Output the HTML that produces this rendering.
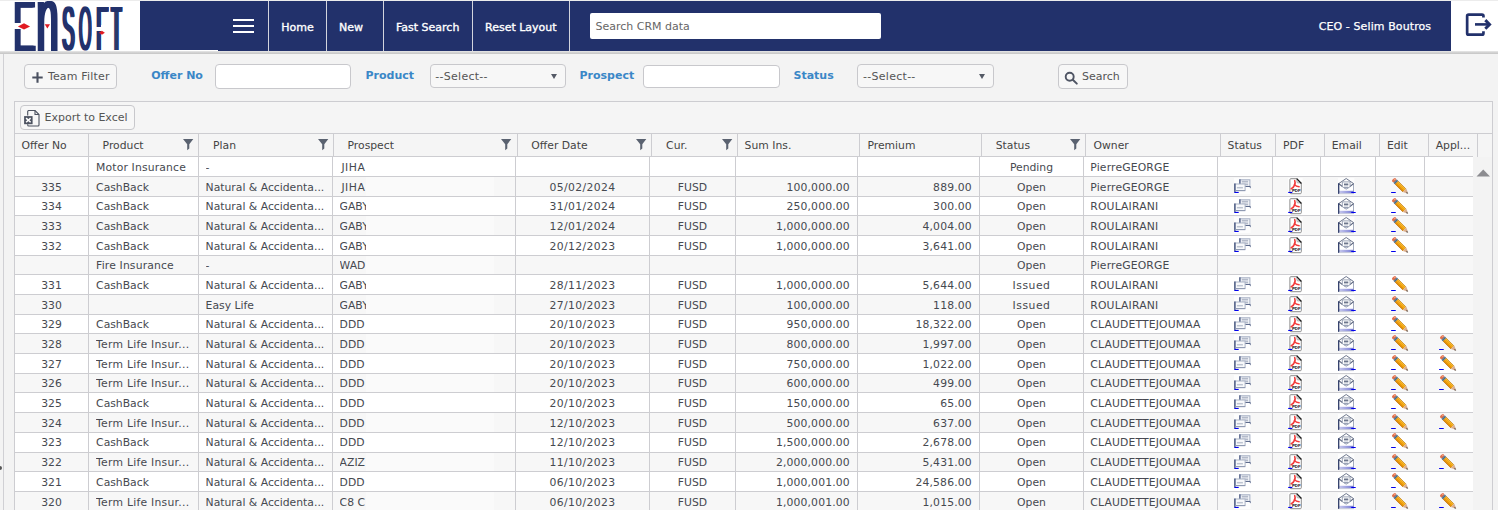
<!DOCTYPE html>
<html lang="en"><head><meta charset="utf-8"><title>CRM - Offers</title>
<style>
html,body{margin:0;padding:0}
body{width:1498px;height:510px;overflow:hidden;background:#f3f3f3;font-family:"DejaVu Sans","Liberation Sans",sans-serif;font-size:10.800px;color:#444;position:relative}
.abs{position:absolute}
.lg{position:absolute;white-space:nowrap;transform-origin:0 0;line-height:1;color:#22316b;font-family:"Liberation Sans",sans-serif}
#top{left:0;top:0;width:1498px;height:51.200px;background:#fff;border-top:1px solid #ececec;box-sizing:border-box}
#bar{left:140px;top:1px;width:1310.700px;height:48.800px;background:#22316b}
#barb{left:218px;top:1px;width:1232.700px;height:49.800px;background:#22316b}
#bar2{left:140px;top:49px;width:78px;height:2px;background:#fff;opacity:.0}
#topline{left:0;top:51.200px;width:1498px;height:2.700px;background:linear-gradient(#e4e4e4,#dcdcdc 45%,#c9c9c9 55%,#c9c9c9 85%,#e6e6e6)}
.sep{top:1px;width:1.100px;height:49.800px;background:#d3d4dd}
.nav{top:20.600px;color:#fff;font-size:11px;line-height:14px;white-space:nowrap;font-weight:normal;-webkit-text-stroke:.35px #fff}
.hb{left:233px;width:21px;height:2.300px;background:#fff}
#srch{left:589.900px;top:12.800px;width:291.300px;height:26.200px;background:#fff;border-radius:2px;box-sizing:border-box;color:#666;font-size:11px;line-height:27.600px;padding-left:5.600px}
#user{right:66.800px;top:20.400px;color:#fff;font-size:11px;line-height:14px;white-space:nowrap;letter-spacing:.1px;-webkit-text-stroke:.25px #fff}
#leftline{left:3px;top:54px;width:1px;height:458px;background:#d0d0d4}
.btn{box-sizing:border-box;border:1px solid #c8c8cc;border-radius:4px;background:#f7f7f7;color:#555;white-space:nowrap}
.lbl{top:69px;color:#3a87c7;font-weight:bold;font-size:11px;line-height:14px;white-space:nowrap}
.inp{top:64px;height:24.600px;box-sizing:border-box;border:1px solid #c8c8cc;border-radius:4px;background:#fff}
.sel{top:64px;height:23.700px;box-sizing:border-box;border:1px solid #c8c8cc;border-radius:4px;background:#f7f7f7;color:#555;font-size:11px;line-height:23.500px;padding-left:4.800px;letter-spacing:.27px}
.sel i{position:absolute;right:7.800px;top:9px;width:0;height:0;border-left:3.500px solid transparent;border-right:3.500px solid transparent;border-top:5.800px solid #555a66}
#grid{left:14px;top:101px;width:1479px;height:420px;box-sizing:border-box;border:1px solid #cdcdd1;background:#f5f5f5}
#hdr{left:15px;top:133px;width:1477px;height:23px;background:#f5f5f5;border-top:1px solid #cdcdd1;box-sizing:border-box}
.hc{top:135px;height:22px;line-height:22px;color:#444;font-size:10.800px;white-space:nowrap}
.hl{top:133px;width:1px;height:24px}
.fi{position:absolute;top:138.900px}
#body{left:15px;top:157px;width:1458px;height:354px;background:#fff}
.row{left:15px;width:1458px;box-sizing:border-box;border-top:1px solid #cdcdd1;background:#fff}
.row.alt{background:#f7f7f7}
.c{position:absolute;top:1px;white-space:nowrap;overflow:hidden;font-size:10.800px;color:#464950}
.vl{top:156px;width:1px;height:354px}
.red{left:365.500px;width:128.500px;background:#fff}
.ic{position:absolute;overflow:visible}
</style></head><body>

<svg class="abs" style="left:0;top:0" width="0" height="0"><defs><linearGradient id="eg" x1="0" y1="0" x2="1" y2="0"><stop offset="0" stop-color="#c9cbee"/><stop offset=".7" stop-color="#8f92dc"/><stop offset="1" stop-color="#6a6ed6"/></linearGradient><linearGradient id="pg" x1="0" y1="0" x2="0" y2="1"><stop offset="0" stop-color="#ffcf4a"/><stop offset=".45" stop-color="#fbb016"/><stop offset="1" stop-color="#e58a00"/></linearGradient></defs></svg>
<div id="top" class="abs"></div><div id="bar" class="abs"></div><div id="barb" class="abs"></div><div id="topline" class="abs"></div>
<div id="logo" class="abs" style="left:0;top:0;width:140px;height:51px;overflow:hidden"><span class="lg" style="left:12.27px;top:-9.50px;font-size:71.3px;transform:scale(0.472,1);text-shadow:2.83px 0 0 #22316b,5.66px 0 0 #22316b">E</span><span class="lg" style="left:34.70px;top:-27.20px;font-size:92px;transform:scale(0.432,1);text-shadow:3.40px 0 0 #22316b,6.81px 0 0 #22316b">n</span><span class="lg" style="left:61.20px;top:-2.80px;font-size:63px;transform:scale(0.292,1);text-shadow:4.28px 0 0 #22316b,8.56px 0 0 #22316b">S</span><span class="lg" style="left:78.35px;top:-2.80px;font-size:63px;transform:scale(0.255,1);text-shadow:3.92px 0 0 #22316b,7.84px 0 0 #22316b">O</span><span class="lg" style="left:94.90px;top:-2.80px;font-size:63px;transform:scale(0.315,1);text-shadow:3.97px 0 0 #22316b,7.94px 0 0 #22316b">F</span><span class="lg" style="left:109.70px;top:-2.80px;font-size:63px;transform:scale(0.257,1);text-shadow:3.89px 0 0 #22316b,7.78px 0 0 #22316b,11.67px 0 0 #22316b">T</span><div class="abs" style="left:14px;top:22.800px;width:23px;height:6px;background:#fff"></div><div class="abs" style="left:95px;top:26.500px;width:6px;height:4.500px;background:#fff"></div><div class="abs" style="left:100.600px;top:25px;width:9px;height:10px;background:#fff"></div><svg class="abs" style="left:0;top:0" width="140" height="51" viewBox="0 0 140 51"><path d="M17.900 26.400l6.100-3.100l6.100 3.100l-6.100 3z" fill="#e11b22"/><path d="M44.700 24.200h5.300l-2.650 4.300z" fill="#e11b22"/><path d="M98.900 32.700l3-2l3 2l-3 2z" fill="#e11b22"/></svg></div>
<div class="abs sep" style="left:267.7px"></div>
<div class="abs sep" style="left:325.7px"></div>
<div class="abs sep" style="left:382.7px"></div>
<div class="abs sep" style="left:471.7px"></div>
<div class="abs sep" style="left:568.7px"></div>
<div class="abs hb" style="top:19.0px"></div>
<div class="abs hb" style="top:24.8px"></div>
<div class="abs hb" style="top:30.6px"></div>
<div class="abs nav" style="left:281.3px">Home</div>
<div class="abs nav" style="left:339px">New</div>
<div class="abs nav" style="left:396px">Fast Search</div>
<div class="abs nav" style="left:485px">Reset Layout</div>
<div id="srch" class="abs">Search CRM data</div>
<div id="user" class="abs">CEO - Selim Boutros</div>
<svg class="abs" style="left:1464px;top:11px" width="30" height="28" viewBox="0 0 30 28"><path d="M19.450 6.600V5.050a1.500 1.500 0 0 0-1.500-1.500H4.650a1.500 1.500 0 0 0-1.500 1.500V22.150a1.500 1.500 0 0 0 1.500 1.500H17.950a1.500 1.500 0 0 0 1.500-1.500V20.300" fill="none" stroke="#22316b" stroke-width="2.700"/><path d="M11 13.400h13.500" fill="none" stroke="#22316b" stroke-width="2.600"/><path d="M21.300 9.100l4.300 4.300l-4.300 4.300" fill="none" stroke="#22316b" stroke-width="2.900"/></svg>
<div id="leftline" class="abs"></div>
<div class="abs btn" style="left:24.200px;top:64px;width:92.700px;height:24.700px;font-size:11px;line-height:24.500px"><svg style="position:absolute;left:6.600px;top:7px" width="11" height="11" viewBox="0 0 11 11"><path d="M5.500 0.300v10.400M0.300 5.500h10.400" stroke="#4a5060" stroke-width="2.100"/></svg><span style="position:absolute;left:22.700px;top:0;letter-spacing:.18px">Team Filter</span></div>
<div class="abs lbl" style="left:151.200px">Offer No</div><div class="abs inp" style="left:215.200px;width:135.800px"></div>
<div class="abs lbl" style="left:365.500px">Product</div><div class="abs sel" style="left:429.500px;width:136.200px">--Select--<i></i></div>
<div class="abs lbl" style="left:579.500px">Prospect</div><div class="abs inp" style="left:643.400px;width:136.200px;top:65px;height:22.700px"></div>
<div class="abs lbl" style="left:793.500px">Status</div><div class="abs sel" style="left:857.300px;width:136.300px">--Select--<i></i></div>
<div class="abs btn" style="left:1058.300px;top:64px;width:69.700px;height:24.700px;font-size:11px;line-height:24.500px"><svg style="position:absolute;left:4px;top:5px" width="16" height="16" viewBox="0 0 16 16"><circle cx="6.700" cy="6.700" r="4" fill="none" stroke="#4f5564" stroke-width="1.900"/><path d="M9.800 9.800l4 3.800" stroke="#4f5564" stroke-width="2" stroke-linecap="round"/></svg><span style="position:absolute;left:22.700px;top:0">Search</span></div>
<div id="grid" class="abs" style="border-color:#cdcdd1"></div>
<div class="abs btn" style="left:20.100px;top:105.400px;width:114.700px;height:24.300px;font-size:11px;line-height:23.600px;letter-spacing:-.02px"><svg style="position:absolute;left:2.900px;top:3.600px" width="17" height="17" viewBox="0 0 17 17"><path d="M3.700 5.500v-4a1 1 0 0 1 1-1h6.300l4 4v10.500a1 1 0 0 1-1 1h-9.300a1 1 0 0 1-1-1v-0.800" fill="none" stroke="#4d5361" stroke-width="1.100"/><path d="M11 0.500v4h4" fill="none" stroke="#4d5361" stroke-width="1.100"/><rect x="0.100" y="6.100" width="8.500" height="8.100" fill="#4d5361"/><path d="M2.100 8.100l4.500 4.200M6.600 8.100l-4.500 4.200" stroke="#fff" stroke-width="1.500"/></svg><span style="position:absolute;left:23.500px;top:0">Export to Excel</span></div>
<div id="hdr" class="abs" style="border-color:#cdcdd1"></div>
<div class="abs hc" style="left:21.6px">Offer No</div>
<div class="abs hc" style="left:102.6px">Product</div>
<svg class="fi" style="left:182.8px" viewBox="0 0 11 12" width="11" height="12"><path d="M0 0H10.300L6.300 5.200V9.600L4.200 11.300V5.200Z" fill="#5a6270"/></svg>
<div class="abs hc" style="left:213px">Plan</div>
<svg class="fi" style="left:317.8px" viewBox="0 0 11 12" width="11" height="12"><path d="M0 0H10.300L6.300 5.200V9.600L4.200 11.300V5.200Z" fill="#5a6270"/></svg>
<div class="abs hc" style="left:347.5px">Prospect</div>
<svg class="fi" style="left:500.9px" viewBox="0 0 11 12" width="11" height="12"><path d="M0 0H10.300L6.300 5.200V9.600L4.200 11.300V5.200Z" fill="#5a6270"/></svg>
<div class="abs hc" style="left:531.3px">Offer Date</div>
<svg class="fi" style="left:636.0px" viewBox="0 0 11 12" width="11" height="12"><path d="M0 0H10.300L6.300 5.200V9.600L4.200 11.300V5.200Z" fill="#5a6270"/></svg>
<div class="abs hc" style="left:666.1px">Cur.</div>
<svg class="fi" style="left:721.9px" viewBox="0 0 11 12" width="11" height="12"><path d="M0 0H10.300L6.300 5.200V9.600L4.200 11.300V5.200Z" fill="#5a6270"/></svg>
<div class="abs hc" style="left:744.6px">Sum Ins.</div>
<div class="abs hc" style="left:867.4px">Premium</div>
<div class="abs hc" style="left:995.7px">Status</div>
<svg class="fi" style="left:1069.8px" viewBox="0 0 11 12" width="11" height="12"><path d="M0 0H10.300L6.300 5.200V9.600L4.200 11.300V5.200Z" fill="#5a6270"/></svg>
<div class="abs hc" style="left:1093.5px">Owner</div>
<div class="abs hc" style="left:1227.6px">Status</div>
<div class="abs hc" style="left:1283.1px">PDF</div>
<div class="abs hc" style="left:1331.8px">Email</div>
<div class="abs hc" style="left:1386.9px">Edit</div>
<div class="abs hc" style="left:1435.7px">Appl...</div>
<div class="abs hl" style="left:88px;background:#cdcdd1"></div>
<div class="abs hl" style="left:198px;background:#cdcdd1"></div>
<div class="abs hl" style="left:333px;background:#cdcdd1"></div>
<div class="abs hl" style="left:517px;background:#cdcdd1"></div>
<div class="abs hl" style="left:651px;background:#cdcdd1"></div>
<div class="abs hl" style="left:737px;background:#cdcdd1"></div>
<div class="abs hl" style="left:859px;background:#cdcdd1"></div>
<div class="abs hl" style="left:981px;background:#cdcdd1"></div>
<div class="abs hl" style="left:1085px;background:#cdcdd1"></div>
<div class="abs hl" style="left:1220px;background:#cdcdd1"></div>
<div class="abs hl" style="left:1275px;background:#cdcdd1"></div>
<div class="abs hl" style="left:1324px;background:#cdcdd1"></div>
<div class="abs hl" style="left:1379px;background:#cdcdd1"></div>
<div class="abs hl" style="left:1428px;background:#cdcdd1"></div>
<div class="abs hl" style="left:1477px;background:#cdcdd1"></div>
<div id="body" class="abs"></div>
<div class="abs row" style="top:156px;height:20px;border-color:#cdcdd1"><div class="c" style="left:81.1px;width:100.9px;height:18px;line-height:19px;letter-spacing:0.15px">Motor Insurance</div><div class="c" style="left:190.6px;width:125.4px;height:18px;line-height:19px">-</div><div class="c" style="left:324.6px;width:174.4px;height:18px;line-height:19px"><span style="letter-spacing:.5px"><span style="margin-left:1.800px">J</span>IHA</span></div><div class="c" style="left:965px;width:103px;text-align:center;height:18px;line-height:19px">Pending</div><div class="c" style="left:1075.3px;width:125.7px;height:18px;line-height:19px;letter-spacing:0.15px">PierreGEORGE</div><div class="abs red" style="left:350.5px;top:0;height:19px;"></div></div>
<div class="abs row alt" style="top:176px;height:20px;border-color:#cdcdd1"><div class="c" style="left:0px;width:73px;text-align:center;height:18px;line-height:19px">335</div><div class="c" style="left:81.1px;width:100.9px;height:18px;line-height:19px">CashBack</div><div class="c" style="left:190.6px;width:125.4px;height:18px;line-height:19px">Natural &amp; Accidenta...</div><div class="c" style="left:324.6px;width:174.4px;height:18px;line-height:19px"><span style="letter-spacing:.5px"><span style="margin-left:1.800px">J</span>IHA</span></div><div class="c" style="left:501px;width:133px;text-align:center;height:18px;line-height:19px;letter-spacing:0.4px">05/02/2024</div><div class="c" style="left:635px;width:85px;text-align:center;height:18px;line-height:19px">FUSD</div><div class="c" style="left:721px;width:113.8px;text-align:right;height:18px;line-height:19px;letter-spacing:0.15px">100,000.00</div><div class="c" style="left:843px;width:113.8px;text-align:right;height:18px;line-height:19px;letter-spacing:0.15px">889.00</div><div class="c" style="left:965px;width:103px;text-align:center;height:18px;line-height:19px">Open</div><div class="c" style="left:1075.3px;width:125.7px;height:18px;line-height:19px;letter-spacing:0.15px">PierreGEORGE</div><div class="abs red" style="left:350.5px;top:0;height:19px;background:#fafafa"></div><svg class="ic" style="left:1218.7px;top:1px" width="18" height="17" viewBox="0 0 18 17"><rect x="0" y="0" width="16.500" height="16" fill="#fff" opacity=".75"/><rect x="5.900" y="1.800" width="10" height="6.600" fill="#f2f4f8" stroke="#a3adc2" stroke-width="1"/><path d="M5.900 1.300v7.500" stroke="#3b4b78" stroke-width="1.100"/><path d="M5.900 8.500h10.500" stroke="#5c6a8c" stroke-width="1"/><path d="M15.300 8.800h1.400v1.800z" fill="#4a5a80"/><path d="M7.800 3.400h6.300M7.800 5h6.300M7.800 6.600h6.300" stroke="#b3bac9" stroke-width="1.100"/><rect x="0.900" y="6" width="10.200" height="6.600" fill="#f8f9fb" stroke="#aab3c6" stroke-width="1"/><path d="M0.900 5.500v9" stroke="#3b4b78" stroke-width="1.300"/><path d="M0.900 12.600h10.200" stroke="#8d98b0" stroke-width="1"/><path d="M2.900 9.700h6" stroke="#bcc3d0" stroke-width="1.500"/><rect x="0.400" y="13.900" width="4.300" height="1.100" fill="#0000ee"/></svg><svg class="ic" style="left:1272.5px;top:1px" width="16" height="17" viewBox="0 0 16 17"><rect x="0" y="0" width="14.700" height="16.400" fill="#fff" opacity=".75"/><path d="M1.900 1.700a1 1 0 0 1 1-1h6l4.400 4.700v9.300a1 1 0 0 1-1 1h-9.400a1 1 0 0 1-1-1z" fill="#fff" stroke="#8c8c8c" stroke-width="1"/><path d="M8.900 0.700v3.200a1 1 0 0 0 1 1h3.400" fill="#e4e4e4" stroke="#999" stroke-width=".7"/><path d="M8.700 0.600l4.700 4.900" stroke="#1c1c1c" stroke-width="1.300"/><path d="M6.700 2.600c0.800 1.400 0.300 3.300-0.300 4.800c-0.700 1.700-1.900 2.900-3.200 3.400" fill="none" stroke="#f23a3a" stroke-width="1.600" stroke-linecap="round"/><path d="M6.500 6.600c1 1.300 2.500 2.100 4.600 2.200" fill="none" stroke="#f23a3a" stroke-width="1.500" stroke-linecap="round"/><text x="4" y="14.300" font-family="Liberation Sans, sans-serif" font-size="4.300" font-weight="bold" fill="#111" style="text-rendering:geometricPrecision">PDF</text><rect x="0.200" y="13.900" width="4.100" height="1.100" fill="#0000ee"/></svg><svg class="ic" style="left:1322.9px;top:1px" width="19" height="17" viewBox="0 0 19 17"><rect x="0" y="0" width="16.300" height="16" fill="#fff" opacity=".75"/><path d="M0.700 5.500v10.200h14.800v-10.200" fill="#fff" stroke="none"/><path d="M15.500 5.500v10" stroke="#a4acbf" stroke-width="1"/><path d="M0.700 5.600L8.200 0.500L15.600 5.600" fill="none" stroke="#6f788e" stroke-width="1"/><path d="M0.700 5.600l4 3.100M15.600 5.600l-4 3.100" stroke="#59637c" stroke-width="1.100"/><path d="M4.300 8.600v-4.700h7.800v4.700l-3.900 2.600z" fill="#fff" stroke="#8f98ad" stroke-width=".9"/><rect x="6" y="5.500" width="4.300" height="1.900" fill="#6c768c"/><rect x="6" y="8.700" width="4.300" height="1.700" fill="#98a1b5"/><rect x="0.700" y="12.800" width="14.800" height="2.500" fill="url(#eg)"/><path d="M0.700 5.200v10.700" stroke="#2d3a66" stroke-width="1.300"/><path d="M0.700 15.600h14.800" stroke="#b8bdd0" stroke-width=".7"/><rect x="13.100" y="13.900" width="4.700" height="1.100" rx=".5" fill="#0000ee"/></svg><svg class="ic" style="left:1375.9px;top:1px" width="18" height="17" viewBox="0 0 18 17"><path d="M13.500 14.200l3.800 1.500l-1.200-2.800z" fill="#000" opacity=".15"/><g transform="translate(2.300 1.300) rotate(44.800)"><rect x="-0.300" y="-2.300" width="3" height="4.600" rx="1.300" fill="#e2714c"/><rect x="0.300" y="-1.700" width="1.600" height="1.300" rx=".6" fill="#f3a58a"/><rect x="2.500" y="-2.300" width="2.100" height="4.600" fill="#2c4a6b"/><rect x="3.100" y="-2.300" width=".7" height="4.600" fill="#7fa6b8"/><rect x="4.600" y="-2.300" width="11" height="4.600" fill="url(#pg)"/><path d="M4.600 -2.050h11M4.600 2.050h11" stroke="#a8620e" stroke-width=".55"/><path d="M4.600 -0.700h11M4.600 0.800h11" stroke="#c77c08" stroke-width=".4" opacity=".8"/><path d="M15.600 -2.300L20.300 0L15.600 2.300z" fill="#dcae8c"/><path d="M15.600 -2.300L20.300 0" stroke="#b98a6a" stroke-width=".4"/><path d="M18.700 -0.800L20.500 0L18.700 0.800z" fill="#333"/></g><rect x="0" y="13.900" width="4.900" height="1.100" rx=".5" fill="#0000ee"/></svg></div>
<div class="abs row" style="top:196px;height:19px;border-color:#cdcdd1"><div class="c" style="left:0px;width:73px;text-align:center;height:17px;line-height:18px">334</div><div class="c" style="left:81.1px;width:100.9px;height:17px;line-height:18px">CashBack</div><div class="c" style="left:190.6px;width:125.4px;height:17px;line-height:18px">Natural &amp; Accidenta...</div><div class="c" style="left:324.6px;width:174.4px;height:17px;line-height:18px">GABY</div><div class="c" style="left:501px;width:133px;text-align:center;height:17px;line-height:18px;letter-spacing:0.4px">31/01/2024</div><div class="c" style="left:635px;width:85px;text-align:center;height:17px;line-height:18px">FUSD</div><div class="c" style="left:721px;width:113.8px;text-align:right;height:17px;line-height:18px;letter-spacing:0.15px">250,000.00</div><div class="c" style="left:843px;width:113.8px;text-align:right;height:17px;line-height:18px;letter-spacing:0.15px">300.00</div><div class="c" style="left:965px;width:103px;text-align:center;height:17px;line-height:18px">Open</div><div class="c" style="left:1075.3px;width:125.7px;height:17px;line-height:18px;letter-spacing:0.15px">ROULAIRANI</div><div class="abs red" style="left:350.5px;top:0;height:18px;"></div><svg class="ic" style="left:1218.7px;top:1px" width="18" height="17" viewBox="0 0 18 17"><rect x="0" y="0" width="16.500" height="16" fill="#fff" opacity=".75"/><rect x="5.900" y="1.800" width="10" height="6.600" fill="#f2f4f8" stroke="#a3adc2" stroke-width="1"/><path d="M5.900 1.300v7.500" stroke="#3b4b78" stroke-width="1.100"/><path d="M5.900 8.500h10.500" stroke="#5c6a8c" stroke-width="1"/><path d="M15.300 8.800h1.400v1.800z" fill="#4a5a80"/><path d="M7.800 3.400h6.300M7.800 5h6.300M7.800 6.600h6.300" stroke="#b3bac9" stroke-width="1.100"/><rect x="0.900" y="6" width="10.200" height="6.600" fill="#f8f9fb" stroke="#aab3c6" stroke-width="1"/><path d="M0.900 5.500v9" stroke="#3b4b78" stroke-width="1.300"/><path d="M0.900 12.600h10.200" stroke="#8d98b0" stroke-width="1"/><path d="M2.900 9.700h6" stroke="#bcc3d0" stroke-width="1.500"/><rect x="0.400" y="13.900" width="4.300" height="1.100" fill="#0000ee"/></svg><svg class="ic" style="left:1272.5px;top:1px" width="16" height="17" viewBox="0 0 16 17"><rect x="0" y="0" width="14.700" height="16.400" fill="#fff" opacity=".75"/><path d="M1.900 1.700a1 1 0 0 1 1-1h6l4.400 4.700v9.300a1 1 0 0 1-1 1h-9.400a1 1 0 0 1-1-1z" fill="#fff" stroke="#8c8c8c" stroke-width="1"/><path d="M8.900 0.700v3.200a1 1 0 0 0 1 1h3.400" fill="#e4e4e4" stroke="#999" stroke-width=".7"/><path d="M8.700 0.600l4.700 4.900" stroke="#1c1c1c" stroke-width="1.300"/><path d="M6.700 2.600c0.800 1.400 0.300 3.300-0.300 4.800c-0.700 1.700-1.900 2.900-3.200 3.400" fill="none" stroke="#f23a3a" stroke-width="1.600" stroke-linecap="round"/><path d="M6.500 6.600c1 1.300 2.500 2.100 4.600 2.200" fill="none" stroke="#f23a3a" stroke-width="1.500" stroke-linecap="round"/><text x="4" y="14.300" font-family="Liberation Sans, sans-serif" font-size="4.300" font-weight="bold" fill="#111" style="text-rendering:geometricPrecision">PDF</text><rect x="0.200" y="13.900" width="4.100" height="1.100" fill="#0000ee"/></svg><svg class="ic" style="left:1322.9px;top:1px" width="19" height="17" viewBox="0 0 19 17"><rect x="0" y="0" width="16.300" height="16" fill="#fff" opacity=".75"/><path d="M0.700 5.500v10.200h14.800v-10.200" fill="#fff" stroke="none"/><path d="M15.500 5.500v10" stroke="#a4acbf" stroke-width="1"/><path d="M0.700 5.600L8.200 0.500L15.600 5.600" fill="none" stroke="#6f788e" stroke-width="1"/><path d="M0.700 5.600l4 3.100M15.600 5.600l-4 3.100" stroke="#59637c" stroke-width="1.100"/><path d="M4.300 8.600v-4.700h7.800v4.700l-3.900 2.600z" fill="#fff" stroke="#8f98ad" stroke-width=".9"/><rect x="6" y="5.500" width="4.300" height="1.900" fill="#6c768c"/><rect x="6" y="8.700" width="4.300" height="1.700" fill="#98a1b5"/><rect x="0.700" y="12.800" width="14.800" height="2.500" fill="url(#eg)"/><path d="M0.700 5.200v10.700" stroke="#2d3a66" stroke-width="1.300"/><path d="M0.700 15.600h14.800" stroke="#b8bdd0" stroke-width=".7"/><rect x="13.100" y="13.900" width="4.700" height="1.100" rx=".5" fill="#0000ee"/></svg><svg class="ic" style="left:1375.9px;top:1px" width="18" height="17" viewBox="0 0 18 17"><path d="M13.500 14.200l3.800 1.500l-1.200-2.800z" fill="#000" opacity=".15"/><g transform="translate(2.300 1.300) rotate(44.800)"><rect x="-0.300" y="-2.300" width="3" height="4.600" rx="1.300" fill="#e2714c"/><rect x="0.300" y="-1.700" width="1.600" height="1.300" rx=".6" fill="#f3a58a"/><rect x="2.500" y="-2.300" width="2.100" height="4.600" fill="#2c4a6b"/><rect x="3.100" y="-2.300" width=".7" height="4.600" fill="#7fa6b8"/><rect x="4.600" y="-2.300" width="11" height="4.600" fill="url(#pg)"/><path d="M4.600 -2.050h11M4.600 2.050h11" stroke="#a8620e" stroke-width=".55"/><path d="M4.600 -0.700h11M4.600 0.800h11" stroke="#c77c08" stroke-width=".4" opacity=".8"/><path d="M15.600 -2.300L20.300 0L15.600 2.300z" fill="#dcae8c"/><path d="M15.600 -2.300L20.300 0" stroke="#b98a6a" stroke-width=".4"/><path d="M18.700 -0.800L20.500 0L18.700 0.800z" fill="#333"/></g><rect x="0" y="13.900" width="4.900" height="1.100" rx=".5" fill="#0000ee"/></svg></div>
<div class="abs row alt" style="top:215px;height:20px;border-color:#cdcdd1"><div class="c" style="left:0px;width:73px;text-align:center;height:18px;line-height:19px">333</div><div class="c" style="left:81.1px;width:100.9px;height:18px;line-height:19px">CashBack</div><div class="c" style="left:190.6px;width:125.4px;height:18px;line-height:19px">Natural &amp; Accidenta...</div><div class="c" style="left:324.6px;width:174.4px;height:18px;line-height:19px">GABY</div><div class="c" style="left:501px;width:133px;text-align:center;height:18px;line-height:19px;letter-spacing:0.4px">12/01/2024</div><div class="c" style="left:635px;width:85px;text-align:center;height:18px;line-height:19px">FUSD</div><div class="c" style="left:721px;width:113.8px;text-align:right;height:18px;line-height:19px;letter-spacing:0.15px">1,000,000.00</div><div class="c" style="left:843px;width:113.8px;text-align:right;height:18px;line-height:19px;letter-spacing:0.15px">4,004.00</div><div class="c" style="left:965px;width:103px;text-align:center;height:18px;line-height:19px">Open</div><div class="c" style="left:1075.3px;width:125.7px;height:18px;line-height:19px;letter-spacing:0.15px">ROULAIRANI</div><div class="abs red" style="left:350.5px;top:0;height:19px;background:#fafafa"></div><svg class="ic" style="left:1218.7px;top:1px" width="18" height="17" viewBox="0 0 18 17"><rect x="0" y="0" width="16.500" height="16" fill="#fff" opacity=".75"/><rect x="5.900" y="1.800" width="10" height="6.600" fill="#f2f4f8" stroke="#a3adc2" stroke-width="1"/><path d="M5.900 1.300v7.500" stroke="#3b4b78" stroke-width="1.100"/><path d="M5.900 8.500h10.500" stroke="#5c6a8c" stroke-width="1"/><path d="M15.300 8.800h1.400v1.800z" fill="#4a5a80"/><path d="M7.800 3.400h6.300M7.800 5h6.300M7.800 6.600h6.300" stroke="#b3bac9" stroke-width="1.100"/><rect x="0.900" y="6" width="10.200" height="6.600" fill="#f8f9fb" stroke="#aab3c6" stroke-width="1"/><path d="M0.900 5.500v9" stroke="#3b4b78" stroke-width="1.300"/><path d="M0.900 12.600h10.200" stroke="#8d98b0" stroke-width="1"/><path d="M2.900 9.700h6" stroke="#bcc3d0" stroke-width="1.500"/><rect x="0.400" y="13.900" width="4.300" height="1.100" fill="#0000ee"/></svg><svg class="ic" style="left:1272.5px;top:1px" width="16" height="17" viewBox="0 0 16 17"><rect x="0" y="0" width="14.700" height="16.400" fill="#fff" opacity=".75"/><path d="M1.900 1.700a1 1 0 0 1 1-1h6l4.400 4.700v9.300a1 1 0 0 1-1 1h-9.400a1 1 0 0 1-1-1z" fill="#fff" stroke="#8c8c8c" stroke-width="1"/><path d="M8.900 0.700v3.200a1 1 0 0 0 1 1h3.400" fill="#e4e4e4" stroke="#999" stroke-width=".7"/><path d="M8.700 0.600l4.700 4.900" stroke="#1c1c1c" stroke-width="1.300"/><path d="M6.700 2.600c0.800 1.400 0.300 3.300-0.300 4.800c-0.700 1.700-1.900 2.900-3.200 3.400" fill="none" stroke="#f23a3a" stroke-width="1.600" stroke-linecap="round"/><path d="M6.500 6.600c1 1.300 2.500 2.100 4.600 2.200" fill="none" stroke="#f23a3a" stroke-width="1.500" stroke-linecap="round"/><text x="4" y="14.300" font-family="Liberation Sans, sans-serif" font-size="4.300" font-weight="bold" fill="#111" style="text-rendering:geometricPrecision">PDF</text><rect x="0.200" y="13.900" width="4.100" height="1.100" fill="#0000ee"/></svg><svg class="ic" style="left:1322.9px;top:1px" width="19" height="17" viewBox="0 0 19 17"><rect x="0" y="0" width="16.300" height="16" fill="#fff" opacity=".75"/><path d="M0.700 5.500v10.200h14.800v-10.200" fill="#fff" stroke="none"/><path d="M15.500 5.500v10" stroke="#a4acbf" stroke-width="1"/><path d="M0.700 5.600L8.200 0.500L15.600 5.600" fill="none" stroke="#6f788e" stroke-width="1"/><path d="M0.700 5.600l4 3.100M15.600 5.600l-4 3.100" stroke="#59637c" stroke-width="1.100"/><path d="M4.300 8.600v-4.700h7.800v4.700l-3.900 2.600z" fill="#fff" stroke="#8f98ad" stroke-width=".9"/><rect x="6" y="5.500" width="4.300" height="1.900" fill="#6c768c"/><rect x="6" y="8.700" width="4.300" height="1.700" fill="#98a1b5"/><rect x="0.700" y="12.800" width="14.800" height="2.500" fill="url(#eg)"/><path d="M0.700 5.200v10.700" stroke="#2d3a66" stroke-width="1.300"/><path d="M0.700 15.600h14.800" stroke="#b8bdd0" stroke-width=".7"/><rect x="13.100" y="13.900" width="4.700" height="1.100" rx=".5" fill="#0000ee"/></svg><svg class="ic" style="left:1375.9px;top:1px" width="18" height="17" viewBox="0 0 18 17"><path d="M13.500 14.200l3.800 1.500l-1.200-2.800z" fill="#000" opacity=".15"/><g transform="translate(2.300 1.300) rotate(44.800)"><rect x="-0.300" y="-2.300" width="3" height="4.600" rx="1.300" fill="#e2714c"/><rect x="0.300" y="-1.700" width="1.600" height="1.300" rx=".6" fill="#f3a58a"/><rect x="2.500" y="-2.300" width="2.100" height="4.600" fill="#2c4a6b"/><rect x="3.100" y="-2.300" width=".7" height="4.600" fill="#7fa6b8"/><rect x="4.600" y="-2.300" width="11" height="4.600" fill="url(#pg)"/><path d="M4.600 -2.050h11M4.600 2.050h11" stroke="#a8620e" stroke-width=".55"/><path d="M4.600 -0.700h11M4.600 0.800h11" stroke="#c77c08" stroke-width=".4" opacity=".8"/><path d="M15.600 -2.300L20.300 0L15.600 2.300z" fill="#dcae8c"/><path d="M15.600 -2.300L20.300 0" stroke="#b98a6a" stroke-width=".4"/><path d="M18.700 -0.800L20.500 0L18.700 0.800z" fill="#333"/></g><rect x="0" y="13.900" width="4.900" height="1.100" rx=".5" fill="#0000ee"/></svg></div>
<div class="abs row" style="top:235px;height:20px;border-color:#cdcdd1"><div class="c" style="left:0px;width:73px;text-align:center;height:18px;line-height:19px">332</div><div class="c" style="left:81.1px;width:100.9px;height:18px;line-height:19px">CashBack</div><div class="c" style="left:190.6px;width:125.4px;height:18px;line-height:19px">Natural &amp; Accidenta...</div><div class="c" style="left:324.6px;width:174.4px;height:18px;line-height:19px">GABY</div><div class="c" style="left:501px;width:133px;text-align:center;height:18px;line-height:19px;letter-spacing:0.4px">20/12/2023</div><div class="c" style="left:635px;width:85px;text-align:center;height:18px;line-height:19px">FUSD</div><div class="c" style="left:721px;width:113.8px;text-align:right;height:18px;line-height:19px;letter-spacing:0.15px">1,000,000.00</div><div class="c" style="left:843px;width:113.8px;text-align:right;height:18px;line-height:19px;letter-spacing:0.15px">3,641.00</div><div class="c" style="left:965px;width:103px;text-align:center;height:18px;line-height:19px">Open</div><div class="c" style="left:1075.3px;width:125.7px;height:18px;line-height:19px;letter-spacing:0.15px">ROULAIRANI</div><div class="abs red" style="left:350.5px;top:0;height:19px;"></div><svg class="ic" style="left:1218.7px;top:1px" width="18" height="17" viewBox="0 0 18 17"><rect x="0" y="0" width="16.500" height="16" fill="#fff" opacity=".75"/><rect x="5.900" y="1.800" width="10" height="6.600" fill="#f2f4f8" stroke="#a3adc2" stroke-width="1"/><path d="M5.900 1.300v7.500" stroke="#3b4b78" stroke-width="1.100"/><path d="M5.900 8.500h10.500" stroke="#5c6a8c" stroke-width="1"/><path d="M15.300 8.800h1.400v1.800z" fill="#4a5a80"/><path d="M7.800 3.400h6.300M7.800 5h6.300M7.800 6.600h6.300" stroke="#b3bac9" stroke-width="1.100"/><rect x="0.900" y="6" width="10.200" height="6.600" fill="#f8f9fb" stroke="#aab3c6" stroke-width="1"/><path d="M0.900 5.500v9" stroke="#3b4b78" stroke-width="1.300"/><path d="M0.900 12.600h10.200" stroke="#8d98b0" stroke-width="1"/><path d="M2.900 9.700h6" stroke="#bcc3d0" stroke-width="1.500"/><rect x="0.400" y="13.900" width="4.300" height="1.100" fill="#0000ee"/></svg><svg class="ic" style="left:1272.5px;top:1px" width="16" height="17" viewBox="0 0 16 17"><rect x="0" y="0" width="14.700" height="16.400" fill="#fff" opacity=".75"/><path d="M1.900 1.700a1 1 0 0 1 1-1h6l4.400 4.700v9.300a1 1 0 0 1-1 1h-9.400a1 1 0 0 1-1-1z" fill="#fff" stroke="#8c8c8c" stroke-width="1"/><path d="M8.900 0.700v3.200a1 1 0 0 0 1 1h3.400" fill="#e4e4e4" stroke="#999" stroke-width=".7"/><path d="M8.700 0.600l4.700 4.900" stroke="#1c1c1c" stroke-width="1.300"/><path d="M6.700 2.600c0.800 1.400 0.300 3.300-0.300 4.800c-0.700 1.700-1.900 2.900-3.200 3.400" fill="none" stroke="#f23a3a" stroke-width="1.600" stroke-linecap="round"/><path d="M6.500 6.600c1 1.300 2.500 2.100 4.600 2.200" fill="none" stroke="#f23a3a" stroke-width="1.500" stroke-linecap="round"/><text x="4" y="14.300" font-family="Liberation Sans, sans-serif" font-size="4.300" font-weight="bold" fill="#111" style="text-rendering:geometricPrecision">PDF</text><rect x="0.200" y="13.900" width="4.100" height="1.100" fill="#0000ee"/></svg><svg class="ic" style="left:1322.9px;top:1px" width="19" height="17" viewBox="0 0 19 17"><rect x="0" y="0" width="16.300" height="16" fill="#fff" opacity=".75"/><path d="M0.700 5.500v10.200h14.800v-10.200" fill="#fff" stroke="none"/><path d="M15.500 5.500v10" stroke="#a4acbf" stroke-width="1"/><path d="M0.700 5.600L8.200 0.500L15.600 5.600" fill="none" stroke="#6f788e" stroke-width="1"/><path d="M0.700 5.600l4 3.100M15.600 5.600l-4 3.100" stroke="#59637c" stroke-width="1.100"/><path d="M4.300 8.600v-4.700h7.800v4.700l-3.900 2.600z" fill="#fff" stroke="#8f98ad" stroke-width=".9"/><rect x="6" y="5.500" width="4.300" height="1.900" fill="#6c768c"/><rect x="6" y="8.700" width="4.300" height="1.700" fill="#98a1b5"/><rect x="0.700" y="12.800" width="14.800" height="2.500" fill="url(#eg)"/><path d="M0.700 5.200v10.700" stroke="#2d3a66" stroke-width="1.300"/><path d="M0.700 15.600h14.800" stroke="#b8bdd0" stroke-width=".7"/><rect x="13.100" y="13.900" width="4.700" height="1.100" rx=".5" fill="#0000ee"/></svg><svg class="ic" style="left:1375.9px;top:1px" width="18" height="17" viewBox="0 0 18 17"><path d="M13.500 14.200l3.800 1.500l-1.200-2.800z" fill="#000" opacity=".15"/><g transform="translate(2.300 1.300) rotate(44.800)"><rect x="-0.300" y="-2.300" width="3" height="4.600" rx="1.300" fill="#e2714c"/><rect x="0.300" y="-1.700" width="1.600" height="1.300" rx=".6" fill="#f3a58a"/><rect x="2.500" y="-2.300" width="2.100" height="4.600" fill="#2c4a6b"/><rect x="3.100" y="-2.300" width=".7" height="4.600" fill="#7fa6b8"/><rect x="4.600" y="-2.300" width="11" height="4.600" fill="url(#pg)"/><path d="M4.600 -2.050h11M4.600 2.050h11" stroke="#a8620e" stroke-width=".55"/><path d="M4.600 -0.700h11M4.600 0.800h11" stroke="#c77c08" stroke-width=".4" opacity=".8"/><path d="M15.600 -2.300L20.300 0L15.600 2.300z" fill="#dcae8c"/><path d="M15.600 -2.300L20.300 0" stroke="#b98a6a" stroke-width=".4"/><path d="M18.700 -0.800L20.500 0L18.700 0.800z" fill="#333"/></g><rect x="0" y="13.900" width="4.900" height="1.100" rx=".5" fill="#0000ee"/></svg></div>
<div class="abs row alt" style="top:255px;height:19px;border-color:#cdcdd1"><div class="c" style="left:81.1px;width:100.9px;height:17px;line-height:18px;letter-spacing:0.15px">Fire Insurance</div><div class="c" style="left:190.6px;width:125.4px;height:17px;line-height:18px">-</div><div class="c" style="left:324.6px;width:174.4px;height:17px;line-height:18px">WAD</div><div class="c" style="left:965px;width:103px;text-align:center;height:17px;line-height:18px">Open</div><div class="c" style="left:1075.3px;width:125.7px;height:17px;line-height:18px;letter-spacing:0.15px">PierreGEORGE</div><div class="abs red" style="left:350.5px;top:0;height:18px;background:#fafafa"></div></div>
<div class="abs row" style="top:274px;height:20px;border-color:#cdcdd1"><div class="c" style="left:0px;width:73px;text-align:center;height:18px;line-height:19px">331</div><div class="c" style="left:81.1px;width:100.9px;height:18px;line-height:19px">CashBack</div><div class="c" style="left:190.6px;width:125.4px;height:18px;line-height:19px">Natural &amp; Accidenta...</div><div class="c" style="left:324.6px;width:174.4px;height:18px;line-height:19px">GABY</div><div class="c" style="left:501px;width:133px;text-align:center;height:18px;line-height:19px;letter-spacing:0.4px">28/11/2023</div><div class="c" style="left:635px;width:85px;text-align:center;height:18px;line-height:19px">FUSD</div><div class="c" style="left:721px;width:113.8px;text-align:right;height:18px;line-height:19px;letter-spacing:0.15px">1,000,000.00</div><div class="c" style="left:843px;width:113.8px;text-align:right;height:18px;line-height:19px;letter-spacing:0.15px">5,644.00</div><div class="c" style="left:965px;width:103px;text-align:center;height:18px;line-height:19px;letter-spacing:0.5px">Issued</div><div class="c" style="left:1075.3px;width:125.7px;height:18px;line-height:19px;letter-spacing:0.15px">ROULAIRANI</div><div class="abs red" style="left:350.5px;top:0;height:19px;"></div><svg class="ic" style="left:1218.7px;top:1px" width="18" height="17" viewBox="0 0 18 17"><rect x="0" y="0" width="16.500" height="16" fill="#fff" opacity=".75"/><rect x="5.900" y="1.800" width="10" height="6.600" fill="#f2f4f8" stroke="#a3adc2" stroke-width="1"/><path d="M5.900 1.300v7.500" stroke="#3b4b78" stroke-width="1.100"/><path d="M5.900 8.500h10.500" stroke="#5c6a8c" stroke-width="1"/><path d="M15.300 8.800h1.400v1.800z" fill="#4a5a80"/><path d="M7.800 3.400h6.300M7.800 5h6.300M7.800 6.600h6.300" stroke="#b3bac9" stroke-width="1.100"/><rect x="0.900" y="6" width="10.200" height="6.600" fill="#f8f9fb" stroke="#aab3c6" stroke-width="1"/><path d="M0.900 5.500v9" stroke="#3b4b78" stroke-width="1.300"/><path d="M0.900 12.600h10.200" stroke="#8d98b0" stroke-width="1"/><path d="M2.900 9.700h6" stroke="#bcc3d0" stroke-width="1.500"/><rect x="0.400" y="13.900" width="4.300" height="1.100" fill="#0000ee"/></svg><svg class="ic" style="left:1272.5px;top:1px" width="16" height="17" viewBox="0 0 16 17"><rect x="0" y="0" width="14.700" height="16.400" fill="#fff" opacity=".75"/><path d="M1.900 1.700a1 1 0 0 1 1-1h6l4.400 4.700v9.300a1 1 0 0 1-1 1h-9.400a1 1 0 0 1-1-1z" fill="#fff" stroke="#8c8c8c" stroke-width="1"/><path d="M8.900 0.700v3.200a1 1 0 0 0 1 1h3.400" fill="#e4e4e4" stroke="#999" stroke-width=".7"/><path d="M8.700 0.600l4.700 4.900" stroke="#1c1c1c" stroke-width="1.300"/><path d="M6.700 2.600c0.800 1.400 0.300 3.300-0.300 4.800c-0.700 1.700-1.900 2.900-3.200 3.400" fill="none" stroke="#f23a3a" stroke-width="1.600" stroke-linecap="round"/><path d="M6.500 6.600c1 1.300 2.500 2.100 4.600 2.200" fill="none" stroke="#f23a3a" stroke-width="1.500" stroke-linecap="round"/><text x="4" y="14.300" font-family="Liberation Sans, sans-serif" font-size="4.300" font-weight="bold" fill="#111" style="text-rendering:geometricPrecision">PDF</text><rect x="0.200" y="13.900" width="4.100" height="1.100" fill="#0000ee"/></svg><svg class="ic" style="left:1322.9px;top:1px" width="19" height="17" viewBox="0 0 19 17"><rect x="0" y="0" width="16.300" height="16" fill="#fff" opacity=".75"/><path d="M0.700 5.500v10.200h14.800v-10.200" fill="#fff" stroke="none"/><path d="M15.500 5.500v10" stroke="#a4acbf" stroke-width="1"/><path d="M0.700 5.600L8.200 0.500L15.600 5.600" fill="none" stroke="#6f788e" stroke-width="1"/><path d="M0.700 5.600l4 3.100M15.600 5.600l-4 3.100" stroke="#59637c" stroke-width="1.100"/><path d="M4.300 8.600v-4.700h7.800v4.700l-3.900 2.600z" fill="#fff" stroke="#8f98ad" stroke-width=".9"/><rect x="6" y="5.500" width="4.300" height="1.900" fill="#6c768c"/><rect x="6" y="8.700" width="4.300" height="1.700" fill="#98a1b5"/><rect x="0.700" y="12.800" width="14.800" height="2.500" fill="url(#eg)"/><path d="M0.700 5.200v10.700" stroke="#2d3a66" stroke-width="1.300"/><path d="M0.700 15.600h14.800" stroke="#b8bdd0" stroke-width=".7"/><rect x="13.100" y="13.900" width="4.700" height="1.100" rx=".5" fill="#0000ee"/></svg><svg class="ic" style="left:1375.9px;top:1px" width="18" height="17" viewBox="0 0 18 17"><path d="M13.500 14.200l3.800 1.500l-1.200-2.800z" fill="#000" opacity=".15"/><g transform="translate(2.300 1.300) rotate(44.800)"><rect x="-0.300" y="-2.300" width="3" height="4.600" rx="1.300" fill="#e2714c"/><rect x="0.300" y="-1.700" width="1.600" height="1.300" rx=".6" fill="#f3a58a"/><rect x="2.500" y="-2.300" width="2.100" height="4.600" fill="#2c4a6b"/><rect x="3.100" y="-2.300" width=".7" height="4.600" fill="#7fa6b8"/><rect x="4.600" y="-2.300" width="11" height="4.600" fill="url(#pg)"/><path d="M4.600 -2.050h11M4.600 2.050h11" stroke="#a8620e" stroke-width=".55"/><path d="M4.600 -0.700h11M4.600 0.800h11" stroke="#c77c08" stroke-width=".4" opacity=".8"/><path d="M15.600 -2.300L20.300 0L15.600 2.300z" fill="#dcae8c"/><path d="M15.600 -2.300L20.300 0" stroke="#b98a6a" stroke-width=".4"/><path d="M18.700 -0.800L20.500 0L18.700 0.800z" fill="#333"/></g><rect x="0" y="13.900" width="4.900" height="1.100" rx=".5" fill="#0000ee"/></svg></div>
<div class="abs row alt" style="top:294px;height:20px;border-color:#cdcdd1"><div class="c" style="left:0px;width:73px;text-align:center;height:18px;line-height:19px">330</div><div class="c" style="left:190.6px;width:125.4px;height:18px;line-height:19px">Easy Life</div><div class="c" style="left:324.6px;width:174.4px;height:18px;line-height:19px">GABY</div><div class="c" style="left:501px;width:133px;text-align:center;height:18px;line-height:19px;letter-spacing:0.4px">27/10/2023</div><div class="c" style="left:635px;width:85px;text-align:center;height:18px;line-height:19px">FUSD</div><div class="c" style="left:721px;width:113.8px;text-align:right;height:18px;line-height:19px;letter-spacing:0.15px">100,000.00</div><div class="c" style="left:843px;width:113.8px;text-align:right;height:18px;line-height:19px;letter-spacing:0.15px">118.00</div><div class="c" style="left:965px;width:103px;text-align:center;height:18px;line-height:19px;letter-spacing:0.5px">Issued</div><div class="c" style="left:1075.3px;width:125.7px;height:18px;line-height:19px;letter-spacing:0.15px">ROULAIRANI</div><div class="abs red" style="left:350.5px;top:0;height:19px;background:#fafafa"></div><svg class="ic" style="left:1218.7px;top:1px" width="18" height="17" viewBox="0 0 18 17"><rect x="0" y="0" width="16.500" height="16" fill="#fff" opacity=".75"/><rect x="5.900" y="1.800" width="10" height="6.600" fill="#f2f4f8" stroke="#a3adc2" stroke-width="1"/><path d="M5.900 1.300v7.500" stroke="#3b4b78" stroke-width="1.100"/><path d="M5.900 8.500h10.500" stroke="#5c6a8c" stroke-width="1"/><path d="M15.300 8.800h1.400v1.800z" fill="#4a5a80"/><path d="M7.800 3.400h6.300M7.800 5h6.300M7.800 6.600h6.300" stroke="#b3bac9" stroke-width="1.100"/><rect x="0.900" y="6" width="10.200" height="6.600" fill="#f8f9fb" stroke="#aab3c6" stroke-width="1"/><path d="M0.900 5.500v9" stroke="#3b4b78" stroke-width="1.300"/><path d="M0.900 12.600h10.200" stroke="#8d98b0" stroke-width="1"/><path d="M2.900 9.700h6" stroke="#bcc3d0" stroke-width="1.500"/><rect x="0.400" y="13.900" width="4.300" height="1.100" fill="#0000ee"/></svg><svg class="ic" style="left:1272.5px;top:1px" width="16" height="17" viewBox="0 0 16 17"><rect x="0" y="0" width="14.700" height="16.400" fill="#fff" opacity=".75"/><path d="M1.900 1.700a1 1 0 0 1 1-1h6l4.400 4.700v9.300a1 1 0 0 1-1 1h-9.400a1 1 0 0 1-1-1z" fill="#fff" stroke="#8c8c8c" stroke-width="1"/><path d="M8.900 0.700v3.200a1 1 0 0 0 1 1h3.400" fill="#e4e4e4" stroke="#999" stroke-width=".7"/><path d="M8.700 0.600l4.700 4.900" stroke="#1c1c1c" stroke-width="1.300"/><path d="M6.700 2.600c0.800 1.400 0.300 3.300-0.300 4.800c-0.700 1.700-1.900 2.900-3.200 3.400" fill="none" stroke="#f23a3a" stroke-width="1.600" stroke-linecap="round"/><path d="M6.500 6.600c1 1.300 2.500 2.100 4.600 2.200" fill="none" stroke="#f23a3a" stroke-width="1.500" stroke-linecap="round"/><text x="4" y="14.300" font-family="Liberation Sans, sans-serif" font-size="4.300" font-weight="bold" fill="#111" style="text-rendering:geometricPrecision">PDF</text><rect x="0.200" y="13.900" width="4.100" height="1.100" fill="#0000ee"/></svg><svg class="ic" style="left:1322.9px;top:1px" width="19" height="17" viewBox="0 0 19 17"><rect x="0" y="0" width="16.300" height="16" fill="#fff" opacity=".75"/><path d="M0.700 5.500v10.200h14.800v-10.200" fill="#fff" stroke="none"/><path d="M15.500 5.500v10" stroke="#a4acbf" stroke-width="1"/><path d="M0.700 5.600L8.200 0.500L15.600 5.600" fill="none" stroke="#6f788e" stroke-width="1"/><path d="M0.700 5.600l4 3.100M15.600 5.600l-4 3.100" stroke="#59637c" stroke-width="1.100"/><path d="M4.300 8.600v-4.700h7.800v4.700l-3.900 2.600z" fill="#fff" stroke="#8f98ad" stroke-width=".9"/><rect x="6" y="5.500" width="4.300" height="1.900" fill="#6c768c"/><rect x="6" y="8.700" width="4.300" height="1.700" fill="#98a1b5"/><rect x="0.700" y="12.800" width="14.800" height="2.500" fill="url(#eg)"/><path d="M0.700 5.200v10.700" stroke="#2d3a66" stroke-width="1.300"/><path d="M0.700 15.600h14.800" stroke="#b8bdd0" stroke-width=".7"/><rect x="13.100" y="13.900" width="4.700" height="1.100" rx=".5" fill="#0000ee"/></svg><svg class="ic" style="left:1375.9px;top:1px" width="18" height="17" viewBox="0 0 18 17"><path d="M13.500 14.200l3.800 1.500l-1.200-2.800z" fill="#000" opacity=".15"/><g transform="translate(2.300 1.300) rotate(44.800)"><rect x="-0.300" y="-2.300" width="3" height="4.600" rx="1.300" fill="#e2714c"/><rect x="0.300" y="-1.700" width="1.600" height="1.300" rx=".6" fill="#f3a58a"/><rect x="2.500" y="-2.300" width="2.100" height="4.600" fill="#2c4a6b"/><rect x="3.100" y="-2.300" width=".7" height="4.600" fill="#7fa6b8"/><rect x="4.600" y="-2.300" width="11" height="4.600" fill="url(#pg)"/><path d="M4.600 -2.050h11M4.600 2.050h11" stroke="#a8620e" stroke-width=".55"/><path d="M4.600 -0.700h11M4.600 0.800h11" stroke="#c77c08" stroke-width=".4" opacity=".8"/><path d="M15.600 -2.300L20.300 0L15.600 2.300z" fill="#dcae8c"/><path d="M15.600 -2.300L20.300 0" stroke="#b98a6a" stroke-width=".4"/><path d="M18.700 -0.800L20.500 0L18.700 0.800z" fill="#333"/></g><rect x="0" y="13.900" width="4.900" height="1.100" rx=".5" fill="#0000ee"/></svg></div>
<div class="abs row" style="top:314px;height:19px;border-color:#cdcdd1"><div class="c" style="left:0px;width:73px;text-align:center;height:17px;line-height:18px">329</div><div class="c" style="left:81.1px;width:100.9px;height:17px;line-height:18px">CashBack</div><div class="c" style="left:190.6px;width:125.4px;height:17px;line-height:18px">Natural &amp; Accidenta...</div><div class="c" style="left:324.6px;width:174.4px;height:17px;line-height:18px">DDD</div><div class="c" style="left:501px;width:133px;text-align:center;height:17px;line-height:18px;letter-spacing:0.4px">20/10/2023</div><div class="c" style="left:635px;width:85px;text-align:center;height:17px;line-height:18px">FUSD</div><div class="c" style="left:721px;width:113.8px;text-align:right;height:17px;line-height:18px;letter-spacing:0.15px">950,000.00</div><div class="c" style="left:843px;width:113.8px;text-align:right;height:17px;line-height:18px;letter-spacing:0.15px">18,322.00</div><div class="c" style="left:965px;width:103px;text-align:center;height:17px;line-height:18px">Open</div><div class="c" style="left:1075.3px;width:125.7px;height:17px;line-height:18px;letter-spacing:0.15px">CLAUDETTEJOUMAA</div><div class="abs red" style="left:350.5px;top:0;height:18px;"></div><svg class="ic" style="left:1218.7px;top:1px" width="18" height="17" viewBox="0 0 18 17"><rect x="0" y="0" width="16.500" height="16" fill="#fff" opacity=".75"/><rect x="5.900" y="1.800" width="10" height="6.600" fill="#f2f4f8" stroke="#a3adc2" stroke-width="1"/><path d="M5.900 1.300v7.500" stroke="#3b4b78" stroke-width="1.100"/><path d="M5.900 8.500h10.500" stroke="#5c6a8c" stroke-width="1"/><path d="M15.300 8.800h1.400v1.800z" fill="#4a5a80"/><path d="M7.800 3.400h6.300M7.800 5h6.300M7.800 6.600h6.300" stroke="#b3bac9" stroke-width="1.100"/><rect x="0.900" y="6" width="10.200" height="6.600" fill="#f8f9fb" stroke="#aab3c6" stroke-width="1"/><path d="M0.900 5.500v9" stroke="#3b4b78" stroke-width="1.300"/><path d="M0.900 12.600h10.200" stroke="#8d98b0" stroke-width="1"/><path d="M2.900 9.700h6" stroke="#bcc3d0" stroke-width="1.500"/><rect x="0.400" y="13.900" width="4.300" height="1.100" fill="#0000ee"/></svg><svg class="ic" style="left:1272.5px;top:1px" width="16" height="17" viewBox="0 0 16 17"><rect x="0" y="0" width="14.700" height="16.400" fill="#fff" opacity=".75"/><path d="M1.900 1.700a1 1 0 0 1 1-1h6l4.400 4.700v9.300a1 1 0 0 1-1 1h-9.400a1 1 0 0 1-1-1z" fill="#fff" stroke="#8c8c8c" stroke-width="1"/><path d="M8.900 0.700v3.200a1 1 0 0 0 1 1h3.400" fill="#e4e4e4" stroke="#999" stroke-width=".7"/><path d="M8.700 0.600l4.700 4.900" stroke="#1c1c1c" stroke-width="1.300"/><path d="M6.700 2.600c0.800 1.400 0.300 3.300-0.300 4.800c-0.700 1.700-1.900 2.900-3.200 3.400" fill="none" stroke="#f23a3a" stroke-width="1.600" stroke-linecap="round"/><path d="M6.500 6.600c1 1.300 2.500 2.100 4.600 2.200" fill="none" stroke="#f23a3a" stroke-width="1.500" stroke-linecap="round"/><text x="4" y="14.300" font-family="Liberation Sans, sans-serif" font-size="4.300" font-weight="bold" fill="#111" style="text-rendering:geometricPrecision">PDF</text><rect x="0.200" y="13.900" width="4.100" height="1.100" fill="#0000ee"/></svg><svg class="ic" style="left:1322.9px;top:1px" width="19" height="17" viewBox="0 0 19 17"><rect x="0" y="0" width="16.300" height="16" fill="#fff" opacity=".75"/><path d="M0.700 5.500v10.200h14.800v-10.200" fill="#fff" stroke="none"/><path d="M15.500 5.500v10" stroke="#a4acbf" stroke-width="1"/><path d="M0.700 5.600L8.200 0.500L15.600 5.600" fill="none" stroke="#6f788e" stroke-width="1"/><path d="M0.700 5.600l4 3.100M15.600 5.600l-4 3.100" stroke="#59637c" stroke-width="1.100"/><path d="M4.300 8.600v-4.700h7.800v4.700l-3.900 2.600z" fill="#fff" stroke="#8f98ad" stroke-width=".9"/><rect x="6" y="5.500" width="4.300" height="1.900" fill="#6c768c"/><rect x="6" y="8.700" width="4.300" height="1.700" fill="#98a1b5"/><rect x="0.700" y="12.800" width="14.800" height="2.500" fill="url(#eg)"/><path d="M0.700 5.200v10.700" stroke="#2d3a66" stroke-width="1.300"/><path d="M0.700 15.600h14.800" stroke="#b8bdd0" stroke-width=".7"/><rect x="13.100" y="13.900" width="4.700" height="1.100" rx=".5" fill="#0000ee"/></svg><svg class="ic" style="left:1375.9px;top:1px" width="18" height="17" viewBox="0 0 18 17"><path d="M13.500 14.200l3.800 1.500l-1.200-2.800z" fill="#000" opacity=".15"/><g transform="translate(2.300 1.300) rotate(44.800)"><rect x="-0.300" y="-2.300" width="3" height="4.600" rx="1.300" fill="#e2714c"/><rect x="0.300" y="-1.700" width="1.600" height="1.300" rx=".6" fill="#f3a58a"/><rect x="2.500" y="-2.300" width="2.100" height="4.600" fill="#2c4a6b"/><rect x="3.100" y="-2.300" width=".7" height="4.600" fill="#7fa6b8"/><rect x="4.600" y="-2.300" width="11" height="4.600" fill="url(#pg)"/><path d="M4.600 -2.050h11M4.600 2.050h11" stroke="#a8620e" stroke-width=".55"/><path d="M4.600 -0.700h11M4.600 0.800h11" stroke="#c77c08" stroke-width=".4" opacity=".8"/><path d="M15.600 -2.300L20.300 0L15.600 2.300z" fill="#dcae8c"/><path d="M15.600 -2.300L20.300 0" stroke="#b98a6a" stroke-width=".4"/><path d="M18.700 -0.800L20.500 0L18.700 0.800z" fill="#333"/></g><rect x="0" y="13.900" width="4.900" height="1.100" rx=".5" fill="#0000ee"/></svg></div>
<div class="abs row alt" style="top:333px;height:20px;border-color:#cdcdd1"><div class="c" style="left:0px;width:73px;text-align:center;height:18px;line-height:19px">328</div><div class="c" style="left:81.1px;width:100.9px;height:18px;line-height:19px;letter-spacing:0.25px">Term Life Insur...</div><div class="c" style="left:190.6px;width:125.4px;height:18px;line-height:19px">Natural &amp; Accidenta...</div><div class="c" style="left:324.6px;width:174.4px;height:18px;line-height:19px">DDD</div><div class="c" style="left:501px;width:133px;text-align:center;height:18px;line-height:19px;letter-spacing:0.4px">20/10/2023</div><div class="c" style="left:635px;width:85px;text-align:center;height:18px;line-height:19px">FUSD</div><div class="c" style="left:721px;width:113.8px;text-align:right;height:18px;line-height:19px;letter-spacing:0.15px">800,000.00</div><div class="c" style="left:843px;width:113.8px;text-align:right;height:18px;line-height:19px;letter-spacing:0.15px">1,997.00</div><div class="c" style="left:965px;width:103px;text-align:center;height:18px;line-height:19px">Open</div><div class="c" style="left:1075.3px;width:125.7px;height:18px;line-height:19px;letter-spacing:0.15px">CLAUDETTEJOUMAA</div><div class="abs red" style="left:350.5px;top:0;height:19px;background:#fafafa"></div><svg class="ic" style="left:1218.7px;top:1px" width="18" height="17" viewBox="0 0 18 17"><rect x="0" y="0" width="16.500" height="16" fill="#fff" opacity=".75"/><rect x="5.900" y="1.800" width="10" height="6.600" fill="#f2f4f8" stroke="#a3adc2" stroke-width="1"/><path d="M5.900 1.300v7.500" stroke="#3b4b78" stroke-width="1.100"/><path d="M5.900 8.500h10.500" stroke="#5c6a8c" stroke-width="1"/><path d="M15.300 8.800h1.400v1.800z" fill="#4a5a80"/><path d="M7.800 3.400h6.300M7.800 5h6.300M7.800 6.600h6.300" stroke="#b3bac9" stroke-width="1.100"/><rect x="0.900" y="6" width="10.200" height="6.600" fill="#f8f9fb" stroke="#aab3c6" stroke-width="1"/><path d="M0.900 5.500v9" stroke="#3b4b78" stroke-width="1.300"/><path d="M0.900 12.600h10.200" stroke="#8d98b0" stroke-width="1"/><path d="M2.900 9.700h6" stroke="#bcc3d0" stroke-width="1.500"/><rect x="0.400" y="13.900" width="4.300" height="1.100" fill="#0000ee"/></svg><svg class="ic" style="left:1272.5px;top:1px" width="16" height="17" viewBox="0 0 16 17"><rect x="0" y="0" width="14.700" height="16.400" fill="#fff" opacity=".75"/><path d="M1.900 1.700a1 1 0 0 1 1-1h6l4.400 4.700v9.300a1 1 0 0 1-1 1h-9.400a1 1 0 0 1-1-1z" fill="#fff" stroke="#8c8c8c" stroke-width="1"/><path d="M8.900 0.700v3.200a1 1 0 0 0 1 1h3.400" fill="#e4e4e4" stroke="#999" stroke-width=".7"/><path d="M8.700 0.600l4.700 4.900" stroke="#1c1c1c" stroke-width="1.300"/><path d="M6.700 2.600c0.800 1.400 0.300 3.300-0.300 4.800c-0.700 1.700-1.900 2.900-3.200 3.400" fill="none" stroke="#f23a3a" stroke-width="1.600" stroke-linecap="round"/><path d="M6.500 6.600c1 1.300 2.500 2.100 4.600 2.200" fill="none" stroke="#f23a3a" stroke-width="1.500" stroke-linecap="round"/><text x="4" y="14.300" font-family="Liberation Sans, sans-serif" font-size="4.300" font-weight="bold" fill="#111" style="text-rendering:geometricPrecision">PDF</text><rect x="0.200" y="13.900" width="4.100" height="1.100" fill="#0000ee"/></svg><svg class="ic" style="left:1322.9px;top:1px" width="19" height="17" viewBox="0 0 19 17"><rect x="0" y="0" width="16.300" height="16" fill="#fff" opacity=".75"/><path d="M0.700 5.500v10.200h14.800v-10.200" fill="#fff" stroke="none"/><path d="M15.500 5.500v10" stroke="#a4acbf" stroke-width="1"/><path d="M0.700 5.600L8.200 0.500L15.600 5.600" fill="none" stroke="#6f788e" stroke-width="1"/><path d="M0.700 5.600l4 3.100M15.600 5.600l-4 3.100" stroke="#59637c" stroke-width="1.100"/><path d="M4.300 8.600v-4.700h7.800v4.700l-3.900 2.600z" fill="#fff" stroke="#8f98ad" stroke-width=".9"/><rect x="6" y="5.500" width="4.300" height="1.900" fill="#6c768c"/><rect x="6" y="8.700" width="4.300" height="1.700" fill="#98a1b5"/><rect x="0.700" y="12.800" width="14.800" height="2.500" fill="url(#eg)"/><path d="M0.700 5.200v10.700" stroke="#2d3a66" stroke-width="1.300"/><path d="M0.700 15.600h14.800" stroke="#b8bdd0" stroke-width=".7"/><rect x="13.100" y="13.900" width="4.700" height="1.100" rx=".5" fill="#0000ee"/></svg><svg class="ic" style="left:1375.9px;top:1px" width="18" height="17" viewBox="0 0 18 17"><path d="M13.500 14.200l3.800 1.500l-1.200-2.800z" fill="#000" opacity=".15"/><g transform="translate(2.300 1.300) rotate(44.800)"><rect x="-0.300" y="-2.300" width="3" height="4.600" rx="1.300" fill="#e2714c"/><rect x="0.300" y="-1.700" width="1.600" height="1.300" rx=".6" fill="#f3a58a"/><rect x="2.500" y="-2.300" width="2.100" height="4.600" fill="#2c4a6b"/><rect x="3.100" y="-2.300" width=".7" height="4.600" fill="#7fa6b8"/><rect x="4.600" y="-2.300" width="11" height="4.600" fill="url(#pg)"/><path d="M4.600 -2.050h11M4.600 2.050h11" stroke="#a8620e" stroke-width=".55"/><path d="M4.600 -0.700h11M4.600 0.800h11" stroke="#c77c08" stroke-width=".4" opacity=".8"/><path d="M15.600 -2.300L20.300 0L15.600 2.300z" fill="#dcae8c"/><path d="M15.600 -2.300L20.300 0" stroke="#b98a6a" stroke-width=".4"/><path d="M18.700 -0.800L20.500 0L18.700 0.800z" fill="#333"/></g><rect x="0" y="13.900" width="4.900" height="1.100" rx=".5" fill="#0000ee"/></svg><svg class="ic" style="left:1424.3px;top:1px" width="18" height="17" viewBox="0 0 18 17"><path d="M13.500 14.200l3.800 1.500l-1.200-2.800z" fill="#000" opacity=".15"/><g transform="translate(2.300 1.300) rotate(44.800)"><rect x="-0.300" y="-2.300" width="3" height="4.600" rx="1.300" fill="#e2714c"/><rect x="0.300" y="-1.700" width="1.600" height="1.300" rx=".6" fill="#f3a58a"/><rect x="2.500" y="-2.300" width="2.100" height="4.600" fill="#2c4a6b"/><rect x="3.100" y="-2.300" width=".7" height="4.600" fill="#7fa6b8"/><rect x="4.600" y="-2.300" width="11" height="4.600" fill="url(#pg)"/><path d="M4.600 -2.050h11M4.600 2.050h11" stroke="#a8620e" stroke-width=".55"/><path d="M4.600 -0.700h11M4.600 0.800h11" stroke="#c77c08" stroke-width=".4" opacity=".8"/><path d="M15.600 -2.300L20.300 0L15.600 2.300z" fill="#dcae8c"/><path d="M15.600 -2.300L20.300 0" stroke="#b98a6a" stroke-width=".4"/><path d="M18.700 -0.800L20.500 0L18.700 0.800z" fill="#333"/></g><rect x="0" y="13.900" width="4.900" height="1.100" rx=".5" fill="#0000ee"/></svg></div>
<div class="abs row" style="top:353px;height:20px;border-color:#cdcdd1"><div class="c" style="left:0px;width:73px;text-align:center;height:18px;line-height:19px">327</div><div class="c" style="left:81.1px;width:100.9px;height:18px;line-height:19px;letter-spacing:0.25px">Term Life Insur...</div><div class="c" style="left:190.6px;width:125.4px;height:18px;line-height:19px">Natural &amp; Accidenta...</div><div class="c" style="left:324.6px;width:174.4px;height:18px;line-height:19px">DDD</div><div class="c" style="left:501px;width:133px;text-align:center;height:18px;line-height:19px;letter-spacing:0.4px">20/10/2023</div><div class="c" style="left:635px;width:85px;text-align:center;height:18px;line-height:19px">FUSD</div><div class="c" style="left:721px;width:113.8px;text-align:right;height:18px;line-height:19px;letter-spacing:0.15px">750,000.00</div><div class="c" style="left:843px;width:113.8px;text-align:right;height:18px;line-height:19px;letter-spacing:0.15px">1,022.00</div><div class="c" style="left:965px;width:103px;text-align:center;height:18px;line-height:19px">Open</div><div class="c" style="left:1075.3px;width:125.7px;height:18px;line-height:19px;letter-spacing:0.15px">CLAUDETTEJOUMAA</div><div class="abs red" style="left:350.5px;top:0;height:19px;"></div><svg class="ic" style="left:1218.7px;top:1px" width="18" height="17" viewBox="0 0 18 17"><rect x="0" y="0" width="16.500" height="16" fill="#fff" opacity=".75"/><rect x="5.900" y="1.800" width="10" height="6.600" fill="#f2f4f8" stroke="#a3adc2" stroke-width="1"/><path d="M5.900 1.300v7.500" stroke="#3b4b78" stroke-width="1.100"/><path d="M5.900 8.500h10.500" stroke="#5c6a8c" stroke-width="1"/><path d="M15.300 8.800h1.400v1.800z" fill="#4a5a80"/><path d="M7.800 3.400h6.300M7.800 5h6.300M7.800 6.600h6.300" stroke="#b3bac9" stroke-width="1.100"/><rect x="0.900" y="6" width="10.200" height="6.600" fill="#f8f9fb" stroke="#aab3c6" stroke-width="1"/><path d="M0.900 5.500v9" stroke="#3b4b78" stroke-width="1.300"/><path d="M0.900 12.600h10.200" stroke="#8d98b0" stroke-width="1"/><path d="M2.900 9.700h6" stroke="#bcc3d0" stroke-width="1.500"/><rect x="0.400" y="13.900" width="4.300" height="1.100" fill="#0000ee"/></svg><svg class="ic" style="left:1272.5px;top:1px" width="16" height="17" viewBox="0 0 16 17"><rect x="0" y="0" width="14.700" height="16.400" fill="#fff" opacity=".75"/><path d="M1.900 1.700a1 1 0 0 1 1-1h6l4.400 4.700v9.300a1 1 0 0 1-1 1h-9.400a1 1 0 0 1-1-1z" fill="#fff" stroke="#8c8c8c" stroke-width="1"/><path d="M8.900 0.700v3.200a1 1 0 0 0 1 1h3.400" fill="#e4e4e4" stroke="#999" stroke-width=".7"/><path d="M8.700 0.600l4.700 4.900" stroke="#1c1c1c" stroke-width="1.300"/><path d="M6.700 2.600c0.800 1.400 0.300 3.300-0.300 4.800c-0.700 1.700-1.900 2.900-3.200 3.400" fill="none" stroke="#f23a3a" stroke-width="1.600" stroke-linecap="round"/><path d="M6.500 6.600c1 1.300 2.500 2.100 4.600 2.200" fill="none" stroke="#f23a3a" stroke-width="1.500" stroke-linecap="round"/><text x="4" y="14.300" font-family="Liberation Sans, sans-serif" font-size="4.300" font-weight="bold" fill="#111" style="text-rendering:geometricPrecision">PDF</text><rect x="0.200" y="13.900" width="4.100" height="1.100" fill="#0000ee"/></svg><svg class="ic" style="left:1322.9px;top:1px" width="19" height="17" viewBox="0 0 19 17"><rect x="0" y="0" width="16.300" height="16" fill="#fff" opacity=".75"/><path d="M0.700 5.500v10.200h14.800v-10.200" fill="#fff" stroke="none"/><path d="M15.500 5.500v10" stroke="#a4acbf" stroke-width="1"/><path d="M0.700 5.600L8.200 0.500L15.600 5.600" fill="none" stroke="#6f788e" stroke-width="1"/><path d="M0.700 5.600l4 3.100M15.600 5.600l-4 3.100" stroke="#59637c" stroke-width="1.100"/><path d="M4.300 8.600v-4.700h7.800v4.700l-3.900 2.600z" fill="#fff" stroke="#8f98ad" stroke-width=".9"/><rect x="6" y="5.500" width="4.300" height="1.900" fill="#6c768c"/><rect x="6" y="8.700" width="4.300" height="1.700" fill="#98a1b5"/><rect x="0.700" y="12.800" width="14.800" height="2.500" fill="url(#eg)"/><path d="M0.700 5.200v10.700" stroke="#2d3a66" stroke-width="1.300"/><path d="M0.700 15.600h14.800" stroke="#b8bdd0" stroke-width=".7"/><rect x="13.100" y="13.900" width="4.700" height="1.100" rx=".5" fill="#0000ee"/></svg><svg class="ic" style="left:1375.9px;top:1px" width="18" height="17" viewBox="0 0 18 17"><path d="M13.500 14.200l3.800 1.500l-1.200-2.800z" fill="#000" opacity=".15"/><g transform="translate(2.300 1.300) rotate(44.800)"><rect x="-0.300" y="-2.300" width="3" height="4.600" rx="1.300" fill="#e2714c"/><rect x="0.300" y="-1.700" width="1.600" height="1.300" rx=".6" fill="#f3a58a"/><rect x="2.500" y="-2.300" width="2.100" height="4.600" fill="#2c4a6b"/><rect x="3.100" y="-2.300" width=".7" height="4.600" fill="#7fa6b8"/><rect x="4.600" y="-2.300" width="11" height="4.600" fill="url(#pg)"/><path d="M4.600 -2.050h11M4.600 2.050h11" stroke="#a8620e" stroke-width=".55"/><path d="M4.600 -0.700h11M4.600 0.800h11" stroke="#c77c08" stroke-width=".4" opacity=".8"/><path d="M15.600 -2.300L20.300 0L15.600 2.300z" fill="#dcae8c"/><path d="M15.600 -2.300L20.300 0" stroke="#b98a6a" stroke-width=".4"/><path d="M18.700 -0.800L20.500 0L18.700 0.800z" fill="#333"/></g><rect x="0" y="13.900" width="4.900" height="1.100" rx=".5" fill="#0000ee"/></svg><svg class="ic" style="left:1424.3px;top:1px" width="18" height="17" viewBox="0 0 18 17"><path d="M13.500 14.200l3.800 1.500l-1.200-2.800z" fill="#000" opacity=".15"/><g transform="translate(2.300 1.300) rotate(44.800)"><rect x="-0.300" y="-2.300" width="3" height="4.600" rx="1.300" fill="#e2714c"/><rect x="0.300" y="-1.700" width="1.600" height="1.300" rx=".6" fill="#f3a58a"/><rect x="2.500" y="-2.300" width="2.100" height="4.600" fill="#2c4a6b"/><rect x="3.100" y="-2.300" width=".7" height="4.600" fill="#7fa6b8"/><rect x="4.600" y="-2.300" width="11" height="4.600" fill="url(#pg)"/><path d="M4.600 -2.050h11M4.600 2.050h11" stroke="#a8620e" stroke-width=".55"/><path d="M4.600 -0.700h11M4.600 0.800h11" stroke="#c77c08" stroke-width=".4" opacity=".8"/><path d="M15.600 -2.300L20.300 0L15.600 2.300z" fill="#dcae8c"/><path d="M15.600 -2.300L20.300 0" stroke="#b98a6a" stroke-width=".4"/><path d="M18.700 -0.800L20.500 0L18.700 0.800z" fill="#333"/></g><rect x="0" y="13.900" width="4.900" height="1.100" rx=".5" fill="#0000ee"/></svg></div>
<div class="abs row alt" style="top:373px;height:19px;border-color:#cdcdd1"><div class="c" style="left:0px;width:73px;text-align:center;height:17px;line-height:18px">326</div><div class="c" style="left:81.1px;width:100.9px;height:17px;line-height:18px;letter-spacing:0.25px">Term Life Insur...</div><div class="c" style="left:190.6px;width:125.4px;height:17px;line-height:18px">Natural &amp; Accidenta...</div><div class="c" style="left:324.6px;width:174.4px;height:17px;line-height:18px">DDD</div><div class="c" style="left:501px;width:133px;text-align:center;height:17px;line-height:18px;letter-spacing:0.4px">20/10/2023</div><div class="c" style="left:635px;width:85px;text-align:center;height:17px;line-height:18px">FUSD</div><div class="c" style="left:721px;width:113.8px;text-align:right;height:17px;line-height:18px;letter-spacing:0.15px">600,000.00</div><div class="c" style="left:843px;width:113.8px;text-align:right;height:17px;line-height:18px;letter-spacing:0.15px">499.00</div><div class="c" style="left:965px;width:103px;text-align:center;height:17px;line-height:18px">Open</div><div class="c" style="left:1075.3px;width:125.7px;height:17px;line-height:18px;letter-spacing:0.15px">CLAUDETTEJOUMAA</div><div class="abs red" style="left:350.5px;top:0;height:18px;background:#fafafa"></div><svg class="ic" style="left:1218.7px;top:1px" width="18" height="17" viewBox="0 0 18 17"><rect x="0" y="0" width="16.500" height="16" fill="#fff" opacity=".75"/><rect x="5.900" y="1.800" width="10" height="6.600" fill="#f2f4f8" stroke="#a3adc2" stroke-width="1"/><path d="M5.900 1.300v7.500" stroke="#3b4b78" stroke-width="1.100"/><path d="M5.900 8.500h10.500" stroke="#5c6a8c" stroke-width="1"/><path d="M15.300 8.800h1.400v1.800z" fill="#4a5a80"/><path d="M7.800 3.400h6.300M7.800 5h6.300M7.800 6.600h6.300" stroke="#b3bac9" stroke-width="1.100"/><rect x="0.900" y="6" width="10.200" height="6.600" fill="#f8f9fb" stroke="#aab3c6" stroke-width="1"/><path d="M0.900 5.500v9" stroke="#3b4b78" stroke-width="1.300"/><path d="M0.900 12.600h10.200" stroke="#8d98b0" stroke-width="1"/><path d="M2.900 9.700h6" stroke="#bcc3d0" stroke-width="1.500"/><rect x="0.400" y="13.900" width="4.300" height="1.100" fill="#0000ee"/></svg><svg class="ic" style="left:1272.5px;top:1px" width="16" height="17" viewBox="0 0 16 17"><rect x="0" y="0" width="14.700" height="16.400" fill="#fff" opacity=".75"/><path d="M1.900 1.700a1 1 0 0 1 1-1h6l4.400 4.700v9.300a1 1 0 0 1-1 1h-9.400a1 1 0 0 1-1-1z" fill="#fff" stroke="#8c8c8c" stroke-width="1"/><path d="M8.900 0.700v3.200a1 1 0 0 0 1 1h3.400" fill="#e4e4e4" stroke="#999" stroke-width=".7"/><path d="M8.700 0.600l4.700 4.900" stroke="#1c1c1c" stroke-width="1.300"/><path d="M6.700 2.600c0.800 1.400 0.300 3.300-0.300 4.800c-0.700 1.700-1.900 2.900-3.200 3.400" fill="none" stroke="#f23a3a" stroke-width="1.600" stroke-linecap="round"/><path d="M6.500 6.600c1 1.300 2.500 2.100 4.600 2.200" fill="none" stroke="#f23a3a" stroke-width="1.500" stroke-linecap="round"/><text x="4" y="14.300" font-family="Liberation Sans, sans-serif" font-size="4.300" font-weight="bold" fill="#111" style="text-rendering:geometricPrecision">PDF</text><rect x="0.200" y="13.900" width="4.100" height="1.100" fill="#0000ee"/></svg><svg class="ic" style="left:1322.9px;top:1px" width="19" height="17" viewBox="0 0 19 17"><rect x="0" y="0" width="16.300" height="16" fill="#fff" opacity=".75"/><path d="M0.700 5.500v10.200h14.800v-10.200" fill="#fff" stroke="none"/><path d="M15.500 5.500v10" stroke="#a4acbf" stroke-width="1"/><path d="M0.700 5.600L8.200 0.500L15.600 5.600" fill="none" stroke="#6f788e" stroke-width="1"/><path d="M0.700 5.600l4 3.100M15.600 5.600l-4 3.100" stroke="#59637c" stroke-width="1.100"/><path d="M4.300 8.600v-4.700h7.800v4.700l-3.900 2.600z" fill="#fff" stroke="#8f98ad" stroke-width=".9"/><rect x="6" y="5.500" width="4.300" height="1.900" fill="#6c768c"/><rect x="6" y="8.700" width="4.300" height="1.700" fill="#98a1b5"/><rect x="0.700" y="12.800" width="14.800" height="2.500" fill="url(#eg)"/><path d="M0.700 5.200v10.700" stroke="#2d3a66" stroke-width="1.300"/><path d="M0.700 15.600h14.800" stroke="#b8bdd0" stroke-width=".7"/><rect x="13.100" y="13.900" width="4.700" height="1.100" rx=".5" fill="#0000ee"/></svg><svg class="ic" style="left:1375.9px;top:1px" width="18" height="17" viewBox="0 0 18 17"><path d="M13.500 14.200l3.800 1.500l-1.200-2.800z" fill="#000" opacity=".15"/><g transform="translate(2.300 1.300) rotate(44.800)"><rect x="-0.300" y="-2.300" width="3" height="4.600" rx="1.300" fill="#e2714c"/><rect x="0.300" y="-1.700" width="1.600" height="1.300" rx=".6" fill="#f3a58a"/><rect x="2.500" y="-2.300" width="2.100" height="4.600" fill="#2c4a6b"/><rect x="3.100" y="-2.300" width=".7" height="4.600" fill="#7fa6b8"/><rect x="4.600" y="-2.300" width="11" height="4.600" fill="url(#pg)"/><path d="M4.600 -2.050h11M4.600 2.050h11" stroke="#a8620e" stroke-width=".55"/><path d="M4.600 -0.700h11M4.600 0.800h11" stroke="#c77c08" stroke-width=".4" opacity=".8"/><path d="M15.600 -2.300L20.300 0L15.600 2.300z" fill="#dcae8c"/><path d="M15.600 -2.300L20.300 0" stroke="#b98a6a" stroke-width=".4"/><path d="M18.700 -0.800L20.500 0L18.700 0.800z" fill="#333"/></g><rect x="0" y="13.900" width="4.900" height="1.100" rx=".5" fill="#0000ee"/></svg><svg class="ic" style="left:1424.3px;top:1px" width="18" height="17" viewBox="0 0 18 17"><path d="M13.500 14.200l3.800 1.500l-1.200-2.800z" fill="#000" opacity=".15"/><g transform="translate(2.300 1.300) rotate(44.800)"><rect x="-0.300" y="-2.300" width="3" height="4.600" rx="1.300" fill="#e2714c"/><rect x="0.300" y="-1.700" width="1.600" height="1.300" rx=".6" fill="#f3a58a"/><rect x="2.500" y="-2.300" width="2.100" height="4.600" fill="#2c4a6b"/><rect x="3.100" y="-2.300" width=".7" height="4.600" fill="#7fa6b8"/><rect x="4.600" y="-2.300" width="11" height="4.600" fill="url(#pg)"/><path d="M4.600 -2.050h11M4.600 2.050h11" stroke="#a8620e" stroke-width=".55"/><path d="M4.600 -0.700h11M4.600 0.800h11" stroke="#c77c08" stroke-width=".4" opacity=".8"/><path d="M15.600 -2.300L20.300 0L15.600 2.300z" fill="#dcae8c"/><path d="M15.600 -2.300L20.300 0" stroke="#b98a6a" stroke-width=".4"/><path d="M18.700 -0.800L20.500 0L18.700 0.800z" fill="#333"/></g><rect x="0" y="13.900" width="4.900" height="1.100" rx=".5" fill="#0000ee"/></svg></div>
<div class="abs row" style="top:392px;height:20px;border-color:#cdcdd1"><div class="c" style="left:0px;width:73px;text-align:center;height:18px;line-height:19px">325</div><div class="c" style="left:81.1px;width:100.9px;height:18px;line-height:19px">CashBack</div><div class="c" style="left:190.6px;width:125.4px;height:18px;line-height:19px">Natural &amp; Accidenta...</div><div class="c" style="left:324.6px;width:174.4px;height:18px;line-height:19px">DDD</div><div class="c" style="left:501px;width:133px;text-align:center;height:18px;line-height:19px;letter-spacing:0.4px">20/10/2023</div><div class="c" style="left:635px;width:85px;text-align:center;height:18px;line-height:19px">FUSD</div><div class="c" style="left:721px;width:113.8px;text-align:right;height:18px;line-height:19px;letter-spacing:0.15px">150,000.00</div><div class="c" style="left:843px;width:113.8px;text-align:right;height:18px;line-height:19px;letter-spacing:0.15px">65.00</div><div class="c" style="left:965px;width:103px;text-align:center;height:18px;line-height:19px">Open</div><div class="c" style="left:1075.3px;width:125.7px;height:18px;line-height:19px;letter-spacing:0.15px">CLAUDETTEJOUMAA</div><div class="abs red" style="left:350.5px;top:0;height:19px;"></div><svg class="ic" style="left:1218.7px;top:1px" width="18" height="17" viewBox="0 0 18 17"><rect x="0" y="0" width="16.500" height="16" fill="#fff" opacity=".75"/><rect x="5.900" y="1.800" width="10" height="6.600" fill="#f2f4f8" stroke="#a3adc2" stroke-width="1"/><path d="M5.900 1.300v7.500" stroke="#3b4b78" stroke-width="1.100"/><path d="M5.900 8.500h10.500" stroke="#5c6a8c" stroke-width="1"/><path d="M15.300 8.800h1.400v1.800z" fill="#4a5a80"/><path d="M7.800 3.400h6.300M7.800 5h6.300M7.800 6.600h6.300" stroke="#b3bac9" stroke-width="1.100"/><rect x="0.900" y="6" width="10.200" height="6.600" fill="#f8f9fb" stroke="#aab3c6" stroke-width="1"/><path d="M0.900 5.500v9" stroke="#3b4b78" stroke-width="1.300"/><path d="M0.900 12.600h10.200" stroke="#8d98b0" stroke-width="1"/><path d="M2.900 9.700h6" stroke="#bcc3d0" stroke-width="1.500"/><rect x="0.400" y="13.900" width="4.300" height="1.100" fill="#0000ee"/></svg><svg class="ic" style="left:1272.5px;top:1px" width="16" height="17" viewBox="0 0 16 17"><rect x="0" y="0" width="14.700" height="16.400" fill="#fff" opacity=".75"/><path d="M1.900 1.700a1 1 0 0 1 1-1h6l4.400 4.700v9.300a1 1 0 0 1-1 1h-9.400a1 1 0 0 1-1-1z" fill="#fff" stroke="#8c8c8c" stroke-width="1"/><path d="M8.900 0.700v3.200a1 1 0 0 0 1 1h3.400" fill="#e4e4e4" stroke="#999" stroke-width=".7"/><path d="M8.700 0.600l4.700 4.900" stroke="#1c1c1c" stroke-width="1.300"/><path d="M6.700 2.600c0.800 1.400 0.300 3.300-0.300 4.800c-0.700 1.700-1.900 2.900-3.200 3.400" fill="none" stroke="#f23a3a" stroke-width="1.600" stroke-linecap="round"/><path d="M6.500 6.600c1 1.300 2.500 2.100 4.600 2.200" fill="none" stroke="#f23a3a" stroke-width="1.500" stroke-linecap="round"/><text x="4" y="14.300" font-family="Liberation Sans, sans-serif" font-size="4.300" font-weight="bold" fill="#111" style="text-rendering:geometricPrecision">PDF</text><rect x="0.200" y="13.900" width="4.100" height="1.100" fill="#0000ee"/></svg><svg class="ic" style="left:1322.9px;top:1px" width="19" height="17" viewBox="0 0 19 17"><rect x="0" y="0" width="16.300" height="16" fill="#fff" opacity=".75"/><path d="M0.700 5.500v10.200h14.800v-10.200" fill="#fff" stroke="none"/><path d="M15.500 5.500v10" stroke="#a4acbf" stroke-width="1"/><path d="M0.700 5.600L8.200 0.500L15.600 5.600" fill="none" stroke="#6f788e" stroke-width="1"/><path d="M0.700 5.600l4 3.100M15.600 5.600l-4 3.100" stroke="#59637c" stroke-width="1.100"/><path d="M4.300 8.600v-4.700h7.800v4.700l-3.900 2.600z" fill="#fff" stroke="#8f98ad" stroke-width=".9"/><rect x="6" y="5.500" width="4.300" height="1.900" fill="#6c768c"/><rect x="6" y="8.700" width="4.300" height="1.700" fill="#98a1b5"/><rect x="0.700" y="12.800" width="14.800" height="2.500" fill="url(#eg)"/><path d="M0.700 5.200v10.700" stroke="#2d3a66" stroke-width="1.300"/><path d="M0.700 15.600h14.800" stroke="#b8bdd0" stroke-width=".7"/><rect x="13.100" y="13.900" width="4.700" height="1.100" rx=".5" fill="#0000ee"/></svg><svg class="ic" style="left:1375.9px;top:1px" width="18" height="17" viewBox="0 0 18 17"><path d="M13.500 14.200l3.800 1.500l-1.200-2.800z" fill="#000" opacity=".15"/><g transform="translate(2.300 1.300) rotate(44.800)"><rect x="-0.300" y="-2.300" width="3" height="4.600" rx="1.300" fill="#e2714c"/><rect x="0.300" y="-1.700" width="1.600" height="1.300" rx=".6" fill="#f3a58a"/><rect x="2.500" y="-2.300" width="2.100" height="4.600" fill="#2c4a6b"/><rect x="3.100" y="-2.300" width=".7" height="4.600" fill="#7fa6b8"/><rect x="4.600" y="-2.300" width="11" height="4.600" fill="url(#pg)"/><path d="M4.600 -2.050h11M4.600 2.050h11" stroke="#a8620e" stroke-width=".55"/><path d="M4.600 -0.700h11M4.600 0.800h11" stroke="#c77c08" stroke-width=".4" opacity=".8"/><path d="M15.600 -2.300L20.300 0L15.600 2.300z" fill="#dcae8c"/><path d="M15.600 -2.300L20.300 0" stroke="#b98a6a" stroke-width=".4"/><path d="M18.700 -0.800L20.500 0L18.700 0.800z" fill="#333"/></g><rect x="0" y="13.900" width="4.900" height="1.100" rx=".5" fill="#0000ee"/></svg></div>
<div class="abs row alt" style="top:412px;height:20px;border-color:#cdcdd1"><div class="c" style="left:0px;width:73px;text-align:center;height:18px;line-height:19px">324</div><div class="c" style="left:81.1px;width:100.9px;height:18px;line-height:19px;letter-spacing:0.25px">Term Life Insur...</div><div class="c" style="left:190.6px;width:125.4px;height:18px;line-height:19px">Natural &amp; Accidenta...</div><div class="c" style="left:324.6px;width:174.4px;height:18px;line-height:19px">DDD</div><div class="c" style="left:501px;width:133px;text-align:center;height:18px;line-height:19px;letter-spacing:0.4px">12/10/2023</div><div class="c" style="left:635px;width:85px;text-align:center;height:18px;line-height:19px">FUSD</div><div class="c" style="left:721px;width:113.8px;text-align:right;height:18px;line-height:19px;letter-spacing:0.15px">500,000.00</div><div class="c" style="left:843px;width:113.8px;text-align:right;height:18px;line-height:19px;letter-spacing:0.15px">637.00</div><div class="c" style="left:965px;width:103px;text-align:center;height:18px;line-height:19px">Open</div><div class="c" style="left:1075.3px;width:125.7px;height:18px;line-height:19px;letter-spacing:0.15px">CLAUDETTEJOUMAA</div><div class="abs red" style="left:350.5px;top:0;height:19px;background:#fafafa"></div><svg class="ic" style="left:1218.7px;top:1px" width="18" height="17" viewBox="0 0 18 17"><rect x="0" y="0" width="16.500" height="16" fill="#fff" opacity=".75"/><rect x="5.900" y="1.800" width="10" height="6.600" fill="#f2f4f8" stroke="#a3adc2" stroke-width="1"/><path d="M5.900 1.300v7.500" stroke="#3b4b78" stroke-width="1.100"/><path d="M5.900 8.500h10.500" stroke="#5c6a8c" stroke-width="1"/><path d="M15.300 8.800h1.400v1.800z" fill="#4a5a80"/><path d="M7.800 3.400h6.300M7.800 5h6.300M7.800 6.600h6.300" stroke="#b3bac9" stroke-width="1.100"/><rect x="0.900" y="6" width="10.200" height="6.600" fill="#f8f9fb" stroke="#aab3c6" stroke-width="1"/><path d="M0.900 5.500v9" stroke="#3b4b78" stroke-width="1.300"/><path d="M0.900 12.600h10.200" stroke="#8d98b0" stroke-width="1"/><path d="M2.900 9.700h6" stroke="#bcc3d0" stroke-width="1.500"/><rect x="0.400" y="13.900" width="4.300" height="1.100" fill="#0000ee"/></svg><svg class="ic" style="left:1272.5px;top:1px" width="16" height="17" viewBox="0 0 16 17"><rect x="0" y="0" width="14.700" height="16.400" fill="#fff" opacity=".75"/><path d="M1.900 1.700a1 1 0 0 1 1-1h6l4.400 4.700v9.300a1 1 0 0 1-1 1h-9.400a1 1 0 0 1-1-1z" fill="#fff" stroke="#8c8c8c" stroke-width="1"/><path d="M8.900 0.700v3.200a1 1 0 0 0 1 1h3.400" fill="#e4e4e4" stroke="#999" stroke-width=".7"/><path d="M8.700 0.600l4.700 4.900" stroke="#1c1c1c" stroke-width="1.300"/><path d="M6.700 2.600c0.800 1.400 0.300 3.300-0.300 4.800c-0.700 1.700-1.900 2.900-3.200 3.400" fill="none" stroke="#f23a3a" stroke-width="1.600" stroke-linecap="round"/><path d="M6.500 6.600c1 1.300 2.500 2.100 4.600 2.200" fill="none" stroke="#f23a3a" stroke-width="1.500" stroke-linecap="round"/><text x="4" y="14.300" font-family="Liberation Sans, sans-serif" font-size="4.300" font-weight="bold" fill="#111" style="text-rendering:geometricPrecision">PDF</text><rect x="0.200" y="13.900" width="4.100" height="1.100" fill="#0000ee"/></svg><svg class="ic" style="left:1322.9px;top:1px" width="19" height="17" viewBox="0 0 19 17"><rect x="0" y="0" width="16.300" height="16" fill="#fff" opacity=".75"/><path d="M0.700 5.500v10.200h14.800v-10.200" fill="#fff" stroke="none"/><path d="M15.500 5.500v10" stroke="#a4acbf" stroke-width="1"/><path d="M0.700 5.600L8.200 0.500L15.600 5.600" fill="none" stroke="#6f788e" stroke-width="1"/><path d="M0.700 5.600l4 3.100M15.600 5.600l-4 3.100" stroke="#59637c" stroke-width="1.100"/><path d="M4.300 8.600v-4.700h7.800v4.700l-3.900 2.600z" fill="#fff" stroke="#8f98ad" stroke-width=".9"/><rect x="6" y="5.500" width="4.300" height="1.900" fill="#6c768c"/><rect x="6" y="8.700" width="4.300" height="1.700" fill="#98a1b5"/><rect x="0.700" y="12.800" width="14.800" height="2.500" fill="url(#eg)"/><path d="M0.700 5.200v10.700" stroke="#2d3a66" stroke-width="1.300"/><path d="M0.700 15.600h14.800" stroke="#b8bdd0" stroke-width=".7"/><rect x="13.100" y="13.900" width="4.700" height="1.100" rx=".5" fill="#0000ee"/></svg><svg class="ic" style="left:1375.9px;top:1px" width="18" height="17" viewBox="0 0 18 17"><path d="M13.500 14.200l3.800 1.500l-1.200-2.800z" fill="#000" opacity=".15"/><g transform="translate(2.300 1.300) rotate(44.800)"><rect x="-0.300" y="-2.300" width="3" height="4.600" rx="1.300" fill="#e2714c"/><rect x="0.300" y="-1.700" width="1.600" height="1.300" rx=".6" fill="#f3a58a"/><rect x="2.500" y="-2.300" width="2.100" height="4.600" fill="#2c4a6b"/><rect x="3.100" y="-2.300" width=".7" height="4.600" fill="#7fa6b8"/><rect x="4.600" y="-2.300" width="11" height="4.600" fill="url(#pg)"/><path d="M4.600 -2.050h11M4.600 2.050h11" stroke="#a8620e" stroke-width=".55"/><path d="M4.600 -0.700h11M4.600 0.800h11" stroke="#c77c08" stroke-width=".4" opacity=".8"/><path d="M15.600 -2.300L20.300 0L15.600 2.300z" fill="#dcae8c"/><path d="M15.600 -2.300L20.300 0" stroke="#b98a6a" stroke-width=".4"/><path d="M18.700 -0.800L20.500 0L18.700 0.800z" fill="#333"/></g><rect x="0" y="13.900" width="4.900" height="1.100" rx=".5" fill="#0000ee"/></svg><svg class="ic" style="left:1424.3px;top:1px" width="18" height="17" viewBox="0 0 18 17"><path d="M13.500 14.200l3.800 1.500l-1.200-2.800z" fill="#000" opacity=".15"/><g transform="translate(2.300 1.300) rotate(44.800)"><rect x="-0.300" y="-2.300" width="3" height="4.600" rx="1.300" fill="#e2714c"/><rect x="0.300" y="-1.700" width="1.600" height="1.300" rx=".6" fill="#f3a58a"/><rect x="2.500" y="-2.300" width="2.100" height="4.600" fill="#2c4a6b"/><rect x="3.100" y="-2.300" width=".7" height="4.600" fill="#7fa6b8"/><rect x="4.600" y="-2.300" width="11" height="4.600" fill="url(#pg)"/><path d="M4.600 -2.050h11M4.600 2.050h11" stroke="#a8620e" stroke-width=".55"/><path d="M4.600 -0.700h11M4.600 0.800h11" stroke="#c77c08" stroke-width=".4" opacity=".8"/><path d="M15.600 -2.300L20.300 0L15.600 2.300z" fill="#dcae8c"/><path d="M15.600 -2.300L20.300 0" stroke="#b98a6a" stroke-width=".4"/><path d="M18.700 -0.800L20.500 0L18.700 0.800z" fill="#333"/></g><rect x="0" y="13.900" width="4.900" height="1.100" rx=".5" fill="#0000ee"/></svg></div>
<div class="abs row" style="top:432px;height:20px;border-color:#cdcdd1"><div class="c" style="left:0px;width:73px;text-align:center;height:18px;line-height:19px;top:0">323</div><div class="c" style="left:81.1px;width:100.9px;height:18px;line-height:19px;top:0">CashBack</div><div class="c" style="left:190.6px;width:125.4px;height:18px;line-height:19px;top:0">Natural &amp; Accidenta...</div><div class="c" style="left:324.6px;width:174.4px;height:18px;line-height:19px;top:0">DDD</div><div class="c" style="left:501px;width:133px;text-align:center;height:18px;line-height:19px;letter-spacing:0.4px;top:0">12/10/2023</div><div class="c" style="left:635px;width:85px;text-align:center;height:18px;line-height:19px;top:0">FUSD</div><div class="c" style="left:721px;width:113.8px;text-align:right;height:18px;line-height:19px;letter-spacing:0.15px;top:0">1,500,000.00</div><div class="c" style="left:843px;width:113.8px;text-align:right;height:18px;line-height:19px;letter-spacing:0.15px;top:0">2,678.00</div><div class="c" style="left:965px;width:103px;text-align:center;height:18px;line-height:19px;top:0">Open</div><div class="c" style="left:1075.3px;width:125.7px;height:18px;line-height:19px;letter-spacing:0.15px;top:0">CLAUDETTEJOUMAA</div><div class="abs red" style="left:350.5px;top:0;height:19px;"></div><svg class="ic" style="left:1218.7px;top:0px" width="18" height="17" viewBox="0 0 18 17"><rect x="0" y="0" width="16.500" height="16" fill="#fff" opacity=".75"/><rect x="5.900" y="1.800" width="10" height="6.600" fill="#f2f4f8" stroke="#a3adc2" stroke-width="1"/><path d="M5.900 1.300v7.500" stroke="#3b4b78" stroke-width="1.100"/><path d="M5.900 8.500h10.500" stroke="#5c6a8c" stroke-width="1"/><path d="M15.300 8.800h1.400v1.800z" fill="#4a5a80"/><path d="M7.800 3.400h6.300M7.800 5h6.300M7.800 6.600h6.300" stroke="#b3bac9" stroke-width="1.100"/><rect x="0.900" y="6" width="10.200" height="6.600" fill="#f8f9fb" stroke="#aab3c6" stroke-width="1"/><path d="M0.900 5.500v9" stroke="#3b4b78" stroke-width="1.300"/><path d="M0.900 12.600h10.200" stroke="#8d98b0" stroke-width="1"/><path d="M2.900 9.700h6" stroke="#bcc3d0" stroke-width="1.500"/><rect x="0.400" y="13.900" width="4.300" height="1.100" fill="#0000ee"/></svg><svg class="ic" style="left:1272.5px;top:0px" width="16" height="17" viewBox="0 0 16 17"><rect x="0" y="0" width="14.700" height="16.400" fill="#fff" opacity=".75"/><path d="M1.900 1.700a1 1 0 0 1 1-1h6l4.400 4.700v9.300a1 1 0 0 1-1 1h-9.400a1 1 0 0 1-1-1z" fill="#fff" stroke="#8c8c8c" stroke-width="1"/><path d="M8.900 0.700v3.200a1 1 0 0 0 1 1h3.400" fill="#e4e4e4" stroke="#999" stroke-width=".7"/><path d="M8.700 0.600l4.700 4.900" stroke="#1c1c1c" stroke-width="1.300"/><path d="M6.700 2.600c0.800 1.400 0.300 3.300-0.300 4.800c-0.700 1.700-1.900 2.900-3.200 3.400" fill="none" stroke="#f23a3a" stroke-width="1.600" stroke-linecap="round"/><path d="M6.500 6.600c1 1.300 2.500 2.100 4.600 2.200" fill="none" stroke="#f23a3a" stroke-width="1.500" stroke-linecap="round"/><text x="4" y="14.300" font-family="Liberation Sans, sans-serif" font-size="4.300" font-weight="bold" fill="#111" style="text-rendering:geometricPrecision">PDF</text><rect x="0.200" y="13.900" width="4.100" height="1.100" fill="#0000ee"/></svg><svg class="ic" style="left:1322.9px;top:0px" width="19" height="17" viewBox="0 0 19 17"><rect x="0" y="0" width="16.300" height="16" fill="#fff" opacity=".75"/><path d="M0.700 5.500v10.200h14.800v-10.200" fill="#fff" stroke="none"/><path d="M15.500 5.500v10" stroke="#a4acbf" stroke-width="1"/><path d="M0.700 5.600L8.200 0.500L15.600 5.600" fill="none" stroke="#6f788e" stroke-width="1"/><path d="M0.700 5.600l4 3.100M15.600 5.600l-4 3.100" stroke="#59637c" stroke-width="1.100"/><path d="M4.300 8.600v-4.700h7.800v4.700l-3.900 2.600z" fill="#fff" stroke="#8f98ad" stroke-width=".9"/><rect x="6" y="5.500" width="4.300" height="1.900" fill="#6c768c"/><rect x="6" y="8.700" width="4.300" height="1.700" fill="#98a1b5"/><rect x="0.700" y="12.800" width="14.800" height="2.500" fill="url(#eg)"/><path d="M0.700 5.200v10.700" stroke="#2d3a66" stroke-width="1.300"/><path d="M0.700 15.600h14.800" stroke="#b8bdd0" stroke-width=".7"/><rect x="13.100" y="13.900" width="4.700" height="1.100" rx=".5" fill="#0000ee"/></svg><svg class="ic" style="left:1375.9px;top:0px" width="18" height="17" viewBox="0 0 18 17"><path d="M13.500 14.200l3.800 1.500l-1.200-2.800z" fill="#000" opacity=".15"/><g transform="translate(2.300 1.300) rotate(44.800)"><rect x="-0.300" y="-2.300" width="3" height="4.600" rx="1.300" fill="#e2714c"/><rect x="0.300" y="-1.700" width="1.600" height="1.300" rx=".6" fill="#f3a58a"/><rect x="2.500" y="-2.300" width="2.100" height="4.600" fill="#2c4a6b"/><rect x="3.100" y="-2.300" width=".7" height="4.600" fill="#7fa6b8"/><rect x="4.600" y="-2.300" width="11" height="4.600" fill="url(#pg)"/><path d="M4.600 -2.050h11M4.600 2.050h11" stroke="#a8620e" stroke-width=".55"/><path d="M4.600 -0.700h11M4.600 0.800h11" stroke="#c77c08" stroke-width=".4" opacity=".8"/><path d="M15.600 -2.300L20.300 0L15.600 2.300z" fill="#dcae8c"/><path d="M15.600 -2.300L20.300 0" stroke="#b98a6a" stroke-width=".4"/><path d="M18.700 -0.800L20.500 0L18.700 0.800z" fill="#333"/></g><rect x="0" y="13.900" width="4.900" height="1.100" rx=".5" fill="#0000ee"/></svg></div>
<div class="abs row alt" style="top:452px;height:19px;border-color:#cdcdd1"><div class="c" style="left:0px;width:73px;text-align:center;height:17px;line-height:18px">322</div><div class="c" style="left:81.1px;width:100.9px;height:17px;line-height:18px;letter-spacing:0.25px">Term Life Insur...</div><div class="c" style="left:190.6px;width:125.4px;height:17px;line-height:18px">Natural &amp; Accidenta...</div><div class="c" style="left:324.6px;width:174.4px;height:17px;line-height:18px">AZIZ</div><div class="c" style="left:501px;width:133px;text-align:center;height:17px;line-height:18px;letter-spacing:0.4px">11/10/2023</div><div class="c" style="left:635px;width:85px;text-align:center;height:17px;line-height:18px">FUSD</div><div class="c" style="left:721px;width:113.8px;text-align:right;height:17px;line-height:18px;letter-spacing:0.15px">2,000,000.00</div><div class="c" style="left:843px;width:113.8px;text-align:right;height:17px;line-height:18px;letter-spacing:0.15px">5,431.00</div><div class="c" style="left:965px;width:103px;text-align:center;height:17px;line-height:18px">Open</div><div class="c" style="left:1075.3px;width:125.7px;height:17px;line-height:18px;letter-spacing:0.15px">CLAUDETTEJOUMAA</div><div class="abs red" style="left:350.5px;top:0;height:18px;background:#fafafa"></div><svg class="ic" style="left:1218.7px;top:1px" width="18" height="17" viewBox="0 0 18 17"><rect x="0" y="0" width="16.500" height="16" fill="#fff" opacity=".75"/><rect x="5.900" y="1.800" width="10" height="6.600" fill="#f2f4f8" stroke="#a3adc2" stroke-width="1"/><path d="M5.900 1.300v7.500" stroke="#3b4b78" stroke-width="1.100"/><path d="M5.900 8.500h10.500" stroke="#5c6a8c" stroke-width="1"/><path d="M15.300 8.800h1.400v1.800z" fill="#4a5a80"/><path d="M7.800 3.400h6.300M7.800 5h6.300M7.800 6.600h6.300" stroke="#b3bac9" stroke-width="1.100"/><rect x="0.900" y="6" width="10.200" height="6.600" fill="#f8f9fb" stroke="#aab3c6" stroke-width="1"/><path d="M0.900 5.500v9" stroke="#3b4b78" stroke-width="1.300"/><path d="M0.900 12.600h10.200" stroke="#8d98b0" stroke-width="1"/><path d="M2.900 9.700h6" stroke="#bcc3d0" stroke-width="1.500"/><rect x="0.400" y="13.900" width="4.300" height="1.100" fill="#0000ee"/></svg><svg class="ic" style="left:1272.5px;top:1px" width="16" height="17" viewBox="0 0 16 17"><rect x="0" y="0" width="14.700" height="16.400" fill="#fff" opacity=".75"/><path d="M1.900 1.700a1 1 0 0 1 1-1h6l4.400 4.700v9.300a1 1 0 0 1-1 1h-9.400a1 1 0 0 1-1-1z" fill="#fff" stroke="#8c8c8c" stroke-width="1"/><path d="M8.900 0.700v3.200a1 1 0 0 0 1 1h3.400" fill="#e4e4e4" stroke="#999" stroke-width=".7"/><path d="M8.700 0.600l4.700 4.900" stroke="#1c1c1c" stroke-width="1.300"/><path d="M6.700 2.600c0.800 1.400 0.300 3.300-0.300 4.800c-0.700 1.700-1.900 2.900-3.200 3.400" fill="none" stroke="#f23a3a" stroke-width="1.600" stroke-linecap="round"/><path d="M6.500 6.600c1 1.300 2.500 2.100 4.600 2.200" fill="none" stroke="#f23a3a" stroke-width="1.500" stroke-linecap="round"/><text x="4" y="14.300" font-family="Liberation Sans, sans-serif" font-size="4.300" font-weight="bold" fill="#111" style="text-rendering:geometricPrecision">PDF</text><rect x="0.200" y="13.900" width="4.100" height="1.100" fill="#0000ee"/></svg><svg class="ic" style="left:1322.9px;top:1px" width="19" height="17" viewBox="0 0 19 17"><rect x="0" y="0" width="16.300" height="16" fill="#fff" opacity=".75"/><path d="M0.700 5.500v10.200h14.800v-10.200" fill="#fff" stroke="none"/><path d="M15.500 5.500v10" stroke="#a4acbf" stroke-width="1"/><path d="M0.700 5.600L8.200 0.500L15.600 5.600" fill="none" stroke="#6f788e" stroke-width="1"/><path d="M0.700 5.600l4 3.100M15.600 5.600l-4 3.100" stroke="#59637c" stroke-width="1.100"/><path d="M4.300 8.600v-4.700h7.800v4.700l-3.900 2.600z" fill="#fff" stroke="#8f98ad" stroke-width=".9"/><rect x="6" y="5.500" width="4.300" height="1.900" fill="#6c768c"/><rect x="6" y="8.700" width="4.300" height="1.700" fill="#98a1b5"/><rect x="0.700" y="12.800" width="14.800" height="2.500" fill="url(#eg)"/><path d="M0.700 5.200v10.700" stroke="#2d3a66" stroke-width="1.300"/><path d="M0.700 15.600h14.800" stroke="#b8bdd0" stroke-width=".7"/><rect x="13.100" y="13.900" width="4.700" height="1.100" rx=".5" fill="#0000ee"/></svg><svg class="ic" style="left:1375.9px;top:1px" width="18" height="17" viewBox="0 0 18 17"><path d="M13.500 14.200l3.800 1.500l-1.200-2.800z" fill="#000" opacity=".15"/><g transform="translate(2.300 1.300) rotate(44.800)"><rect x="-0.300" y="-2.300" width="3" height="4.600" rx="1.300" fill="#e2714c"/><rect x="0.300" y="-1.700" width="1.600" height="1.300" rx=".6" fill="#f3a58a"/><rect x="2.500" y="-2.300" width="2.100" height="4.600" fill="#2c4a6b"/><rect x="3.100" y="-2.300" width=".7" height="4.600" fill="#7fa6b8"/><rect x="4.600" y="-2.300" width="11" height="4.600" fill="url(#pg)"/><path d="M4.600 -2.050h11M4.600 2.050h11" stroke="#a8620e" stroke-width=".55"/><path d="M4.600 -0.700h11M4.600 0.800h11" stroke="#c77c08" stroke-width=".4" opacity=".8"/><path d="M15.600 -2.300L20.300 0L15.600 2.300z" fill="#dcae8c"/><path d="M15.600 -2.300L20.300 0" stroke="#b98a6a" stroke-width=".4"/><path d="M18.700 -0.800L20.500 0L18.700 0.800z" fill="#333"/></g><rect x="0" y="13.900" width="4.900" height="1.100" rx=".5" fill="#0000ee"/></svg><svg class="ic" style="left:1424.3px;top:1px" width="18" height="17" viewBox="0 0 18 17"><path d="M13.500 14.200l3.800 1.500l-1.200-2.800z" fill="#000" opacity=".15"/><g transform="translate(2.300 1.300) rotate(44.800)"><rect x="-0.300" y="-2.300" width="3" height="4.600" rx="1.300" fill="#e2714c"/><rect x="0.300" y="-1.700" width="1.600" height="1.300" rx=".6" fill="#f3a58a"/><rect x="2.500" y="-2.300" width="2.100" height="4.600" fill="#2c4a6b"/><rect x="3.100" y="-2.300" width=".7" height="4.600" fill="#7fa6b8"/><rect x="4.600" y="-2.300" width="11" height="4.600" fill="url(#pg)"/><path d="M4.600 -2.050h11M4.600 2.050h11" stroke="#a8620e" stroke-width=".55"/><path d="M4.600 -0.700h11M4.600 0.800h11" stroke="#c77c08" stroke-width=".4" opacity=".8"/><path d="M15.600 -2.300L20.300 0L15.600 2.300z" fill="#dcae8c"/><path d="M15.600 -2.300L20.300 0" stroke="#b98a6a" stroke-width=".4"/><path d="M18.700 -0.800L20.500 0L18.700 0.800z" fill="#333"/></g><rect x="0" y="13.900" width="4.900" height="1.100" rx=".5" fill="#0000ee"/></svg></div>
<div class="abs row" style="top:471px;height:20px;border-color:#cdcdd1"><div class="c" style="left:0px;width:73px;text-align:center;height:18px;line-height:19px">321</div><div class="c" style="left:81.1px;width:100.9px;height:18px;line-height:19px">CashBack</div><div class="c" style="left:190.6px;width:125.4px;height:18px;line-height:19px">Natural &amp; Accidenta...</div><div class="c" style="left:324.6px;width:174.4px;height:18px;line-height:19px">DDD</div><div class="c" style="left:501px;width:133px;text-align:center;height:18px;line-height:19px;letter-spacing:0.4px">06/10/2023</div><div class="c" style="left:635px;width:85px;text-align:center;height:18px;line-height:19px">FUSD</div><div class="c" style="left:721px;width:113.8px;text-align:right;height:18px;line-height:19px;letter-spacing:0.15px">1,000,001.00</div><div class="c" style="left:843px;width:113.8px;text-align:right;height:18px;line-height:19px;letter-spacing:0.15px">24,586.00</div><div class="c" style="left:965px;width:103px;text-align:center;height:18px;line-height:19px">Open</div><div class="c" style="left:1075.3px;width:125.7px;height:18px;line-height:19px;letter-spacing:0.15px">CLAUDETTEJOUMAA</div><div class="abs red" style="left:350.5px;top:0;height:19px;"></div><svg class="ic" style="left:1218.7px;top:1px" width="18" height="17" viewBox="0 0 18 17"><rect x="0" y="0" width="16.500" height="16" fill="#fff" opacity=".75"/><rect x="5.900" y="1.800" width="10" height="6.600" fill="#f2f4f8" stroke="#a3adc2" stroke-width="1"/><path d="M5.900 1.300v7.500" stroke="#3b4b78" stroke-width="1.100"/><path d="M5.900 8.500h10.500" stroke="#5c6a8c" stroke-width="1"/><path d="M15.300 8.800h1.400v1.800z" fill="#4a5a80"/><path d="M7.800 3.400h6.300M7.800 5h6.300M7.800 6.600h6.300" stroke="#b3bac9" stroke-width="1.100"/><rect x="0.900" y="6" width="10.200" height="6.600" fill="#f8f9fb" stroke="#aab3c6" stroke-width="1"/><path d="M0.900 5.500v9" stroke="#3b4b78" stroke-width="1.300"/><path d="M0.900 12.600h10.200" stroke="#8d98b0" stroke-width="1"/><path d="M2.900 9.700h6" stroke="#bcc3d0" stroke-width="1.500"/><rect x="0.400" y="13.900" width="4.300" height="1.100" fill="#0000ee"/></svg><svg class="ic" style="left:1272.5px;top:1px" width="16" height="17" viewBox="0 0 16 17"><rect x="0" y="0" width="14.700" height="16.400" fill="#fff" opacity=".75"/><path d="M1.900 1.700a1 1 0 0 1 1-1h6l4.400 4.700v9.300a1 1 0 0 1-1 1h-9.400a1 1 0 0 1-1-1z" fill="#fff" stroke="#8c8c8c" stroke-width="1"/><path d="M8.900 0.700v3.200a1 1 0 0 0 1 1h3.400" fill="#e4e4e4" stroke="#999" stroke-width=".7"/><path d="M8.700 0.600l4.700 4.900" stroke="#1c1c1c" stroke-width="1.300"/><path d="M6.700 2.600c0.800 1.400 0.300 3.300-0.300 4.800c-0.700 1.700-1.900 2.900-3.200 3.400" fill="none" stroke="#f23a3a" stroke-width="1.600" stroke-linecap="round"/><path d="M6.500 6.600c1 1.300 2.500 2.100 4.600 2.200" fill="none" stroke="#f23a3a" stroke-width="1.500" stroke-linecap="round"/><text x="4" y="14.300" font-family="Liberation Sans, sans-serif" font-size="4.300" font-weight="bold" fill="#111" style="text-rendering:geometricPrecision">PDF</text><rect x="0.200" y="13.900" width="4.100" height="1.100" fill="#0000ee"/></svg><svg class="ic" style="left:1322.9px;top:1px" width="19" height="17" viewBox="0 0 19 17"><rect x="0" y="0" width="16.300" height="16" fill="#fff" opacity=".75"/><path d="M0.700 5.500v10.200h14.800v-10.200" fill="#fff" stroke="none"/><path d="M15.500 5.500v10" stroke="#a4acbf" stroke-width="1"/><path d="M0.700 5.600L8.200 0.500L15.600 5.600" fill="none" stroke="#6f788e" stroke-width="1"/><path d="M0.700 5.600l4 3.100M15.600 5.600l-4 3.100" stroke="#59637c" stroke-width="1.100"/><path d="M4.300 8.600v-4.700h7.800v4.700l-3.900 2.600z" fill="#fff" stroke="#8f98ad" stroke-width=".9"/><rect x="6" y="5.500" width="4.300" height="1.900" fill="#6c768c"/><rect x="6" y="8.700" width="4.300" height="1.700" fill="#98a1b5"/><rect x="0.700" y="12.800" width="14.800" height="2.500" fill="url(#eg)"/><path d="M0.700 5.200v10.700" stroke="#2d3a66" stroke-width="1.300"/><path d="M0.700 15.600h14.800" stroke="#b8bdd0" stroke-width=".7"/><rect x="13.100" y="13.900" width="4.700" height="1.100" rx=".5" fill="#0000ee"/></svg><svg class="ic" style="left:1375.9px;top:1px" width="18" height="17" viewBox="0 0 18 17"><path d="M13.500 14.200l3.800 1.500l-1.200-2.800z" fill="#000" opacity=".15"/><g transform="translate(2.300 1.300) rotate(44.800)"><rect x="-0.300" y="-2.300" width="3" height="4.600" rx="1.300" fill="#e2714c"/><rect x="0.300" y="-1.700" width="1.600" height="1.300" rx=".6" fill="#f3a58a"/><rect x="2.500" y="-2.300" width="2.100" height="4.600" fill="#2c4a6b"/><rect x="3.100" y="-2.300" width=".7" height="4.600" fill="#7fa6b8"/><rect x="4.600" y="-2.300" width="11" height="4.600" fill="url(#pg)"/><path d="M4.600 -2.050h11M4.600 2.050h11" stroke="#a8620e" stroke-width=".55"/><path d="M4.600 -0.700h11M4.600 0.800h11" stroke="#c77c08" stroke-width=".4" opacity=".8"/><path d="M15.600 -2.300L20.300 0L15.600 2.300z" fill="#dcae8c"/><path d="M15.600 -2.300L20.300 0" stroke="#b98a6a" stroke-width=".4"/><path d="M18.700 -0.800L20.500 0L18.700 0.800z" fill="#333"/></g><rect x="0" y="13.900" width="4.900" height="1.100" rx=".5" fill="#0000ee"/></svg></div>
<div class="abs row alt" style="top:491px;height:20px;border-color:#cdcdd1"><div class="c" style="left:0px;width:73px;text-align:center;height:18px;line-height:19px">320</div><div class="c" style="left:81.1px;width:100.9px;height:18px;line-height:19px;letter-spacing:0.25px">Term Life Insur...</div><div class="c" style="left:190.6px;width:125.4px;height:18px;line-height:19px">Natural &amp; Accidenta...</div><div class="c" style="left:324.6px;width:174.4px;height:18px;line-height:19px">C8 C</div><div class="c" style="left:501px;width:133px;text-align:center;height:18px;line-height:19px;letter-spacing:0.4px">06/10/2023</div><div class="c" style="left:635px;width:85px;text-align:center;height:18px;line-height:19px">FUSD</div><div class="c" style="left:721px;width:113.8px;text-align:right;height:18px;line-height:19px;letter-spacing:0.15px">1,000,001.00</div><div class="c" style="left:843px;width:113.8px;text-align:right;height:18px;line-height:19px;letter-spacing:0.15px">1,015.00</div><div class="c" style="left:965px;width:103px;text-align:center;height:18px;line-height:19px">Open</div><div class="c" style="left:1075.3px;width:125.7px;height:18px;line-height:19px;letter-spacing:0.15px">CLAUDETTEJOUMAA</div><div class="abs red" style="left:350.5px;top:0;height:19px;background:#fafafa"></div><svg class="ic" style="left:1218.7px;top:1px" width="18" height="17" viewBox="0 0 18 17"><rect x="0" y="0" width="16.500" height="16" fill="#fff" opacity=".75"/><rect x="5.900" y="1.800" width="10" height="6.600" fill="#f2f4f8" stroke="#a3adc2" stroke-width="1"/><path d="M5.900 1.300v7.500" stroke="#3b4b78" stroke-width="1.100"/><path d="M5.900 8.500h10.500" stroke="#5c6a8c" stroke-width="1"/><path d="M15.300 8.800h1.400v1.800z" fill="#4a5a80"/><path d="M7.800 3.400h6.300M7.800 5h6.300M7.800 6.600h6.300" stroke="#b3bac9" stroke-width="1.100"/><rect x="0.900" y="6" width="10.200" height="6.600" fill="#f8f9fb" stroke="#aab3c6" stroke-width="1"/><path d="M0.900 5.500v9" stroke="#3b4b78" stroke-width="1.300"/><path d="M0.900 12.600h10.200" stroke="#8d98b0" stroke-width="1"/><path d="M2.900 9.700h6" stroke="#bcc3d0" stroke-width="1.500"/><rect x="0.400" y="13.900" width="4.300" height="1.100" fill="#0000ee"/></svg><svg class="ic" style="left:1272.5px;top:1px" width="16" height="17" viewBox="0 0 16 17"><rect x="0" y="0" width="14.700" height="16.400" fill="#fff" opacity=".75"/><path d="M1.900 1.700a1 1 0 0 1 1-1h6l4.400 4.700v9.300a1 1 0 0 1-1 1h-9.400a1 1 0 0 1-1-1z" fill="#fff" stroke="#8c8c8c" stroke-width="1"/><path d="M8.900 0.700v3.200a1 1 0 0 0 1 1h3.400" fill="#e4e4e4" stroke="#999" stroke-width=".7"/><path d="M8.700 0.600l4.700 4.900" stroke="#1c1c1c" stroke-width="1.300"/><path d="M6.700 2.600c0.800 1.400 0.300 3.300-0.300 4.800c-0.700 1.700-1.900 2.900-3.200 3.400" fill="none" stroke="#f23a3a" stroke-width="1.600" stroke-linecap="round"/><path d="M6.500 6.600c1 1.300 2.500 2.100 4.600 2.200" fill="none" stroke="#f23a3a" stroke-width="1.500" stroke-linecap="round"/><text x="4" y="14.300" font-family="Liberation Sans, sans-serif" font-size="4.300" font-weight="bold" fill="#111" style="text-rendering:geometricPrecision">PDF</text><rect x="0.200" y="13.900" width="4.100" height="1.100" fill="#0000ee"/></svg><svg class="ic" style="left:1322.9px;top:1px" width="19" height="17" viewBox="0 0 19 17"><rect x="0" y="0" width="16.300" height="16" fill="#fff" opacity=".75"/><path d="M0.700 5.500v10.200h14.800v-10.200" fill="#fff" stroke="none"/><path d="M15.500 5.500v10" stroke="#a4acbf" stroke-width="1"/><path d="M0.700 5.600L8.200 0.500L15.600 5.600" fill="none" stroke="#6f788e" stroke-width="1"/><path d="M0.700 5.600l4 3.100M15.600 5.600l-4 3.100" stroke="#59637c" stroke-width="1.100"/><path d="M4.300 8.600v-4.700h7.800v4.700l-3.900 2.600z" fill="#fff" stroke="#8f98ad" stroke-width=".9"/><rect x="6" y="5.500" width="4.300" height="1.900" fill="#6c768c"/><rect x="6" y="8.700" width="4.300" height="1.700" fill="#98a1b5"/><rect x="0.700" y="12.800" width="14.800" height="2.500" fill="url(#eg)"/><path d="M0.700 5.200v10.700" stroke="#2d3a66" stroke-width="1.300"/><path d="M0.700 15.600h14.800" stroke="#b8bdd0" stroke-width=".7"/><rect x="13.100" y="13.900" width="4.700" height="1.100" rx=".5" fill="#0000ee"/></svg><svg class="ic" style="left:1375.9px;top:1px" width="18" height="17" viewBox="0 0 18 17"><path d="M13.500 14.200l3.800 1.500l-1.200-2.800z" fill="#000" opacity=".15"/><g transform="translate(2.300 1.300) rotate(44.800)"><rect x="-0.300" y="-2.300" width="3" height="4.600" rx="1.300" fill="#e2714c"/><rect x="0.300" y="-1.700" width="1.600" height="1.300" rx=".6" fill="#f3a58a"/><rect x="2.500" y="-2.300" width="2.100" height="4.600" fill="#2c4a6b"/><rect x="3.100" y="-2.300" width=".7" height="4.600" fill="#7fa6b8"/><rect x="4.600" y="-2.300" width="11" height="4.600" fill="url(#pg)"/><path d="M4.600 -2.050h11M4.600 2.050h11" stroke="#a8620e" stroke-width=".55"/><path d="M4.600 -0.700h11M4.600 0.800h11" stroke="#c77c08" stroke-width=".4" opacity=".8"/><path d="M15.600 -2.300L20.300 0L15.600 2.300z" fill="#dcae8c"/><path d="M15.600 -2.300L20.300 0" stroke="#b98a6a" stroke-width=".4"/><path d="M18.700 -0.800L20.500 0L18.700 0.800z" fill="#333"/></g><rect x="0" y="13.900" width="4.900" height="1.100" rx=".5" fill="#0000ee"/></svg><svg class="ic" style="left:1424.3px;top:1px" width="18" height="17" viewBox="0 0 18 17"><path d="M13.500 14.200l3.800 1.500l-1.200-2.800z" fill="#000" opacity=".15"/><g transform="translate(2.300 1.300) rotate(44.800)"><rect x="-0.300" y="-2.300" width="3" height="4.600" rx="1.300" fill="#e2714c"/><rect x="0.300" y="-1.700" width="1.600" height="1.300" rx=".6" fill="#f3a58a"/><rect x="2.500" y="-2.300" width="2.100" height="4.600" fill="#2c4a6b"/><rect x="3.100" y="-2.300" width=".7" height="4.600" fill="#7fa6b8"/><rect x="4.600" y="-2.300" width="11" height="4.600" fill="url(#pg)"/><path d="M4.600 -2.050h11M4.600 2.050h11" stroke="#a8620e" stroke-width=".55"/><path d="M4.600 -0.700h11M4.600 0.800h11" stroke="#c77c08" stroke-width=".4" opacity=".8"/><path d="M15.600 -2.300L20.300 0L15.600 2.300z" fill="#dcae8c"/><path d="M15.600 -2.300L20.300 0" stroke="#b98a6a" stroke-width=".4"/><path d="M18.700 -0.800L20.500 0L18.700 0.800z" fill="#333"/></g><rect x="0" y="13.900" width="4.900" height="1.100" rx=".5" fill="#0000ee"/></svg></div>
<div class="abs vl" style="left:88px;background:#cdcdd1"></div>
<div class="abs vl" style="left:198px;background:#cdcdd1"></div>
<div class="abs vl" style="left:332px;background:#cdcdd1"></div>
<div class="abs vl" style="left:515px;background:#cdcdd1"></div>
<div class="abs vl" style="left:649px;background:#cdcdd1"></div>
<div class="abs vl" style="left:735px;background:#cdcdd1"></div>
<div class="abs vl" style="left:857px;background:#cdcdd1"></div>
<div class="abs vl" style="left:979px;background:#cdcdd1"></div>
<div class="abs vl" style="left:1083px;background:#cdcdd1"></div>
<div class="abs vl" style="left:1217px;background:#cdcdd1"></div>
<div class="abs vl" style="left:1272px;background:#cdcdd1"></div>
<div class="abs vl" style="left:1320px;background:#cdcdd1"></div>
<div class="abs vl" style="left:1375px;background:#cdcdd1"></div>
<div class="abs vl" style="left:1424px;background:#cdcdd1"></div>
<div class="abs" style="left:1473px;top:157px;width:19px;height:354px;background:#f3f3f3"></div>
<svg class="abs" style="left:1475.500px;top:168.500px" width="15" height="8" viewBox="0 0 15 8"><path d="M0.500 7.500L7.250 0.500L14 7.500z" fill="#8c8c90"/></svg>
<div class="abs" style="left:0;top:466px;width:2px;height:4px;background:#555;border-radius:0 2px 2px 0"></div>
</body></html>
